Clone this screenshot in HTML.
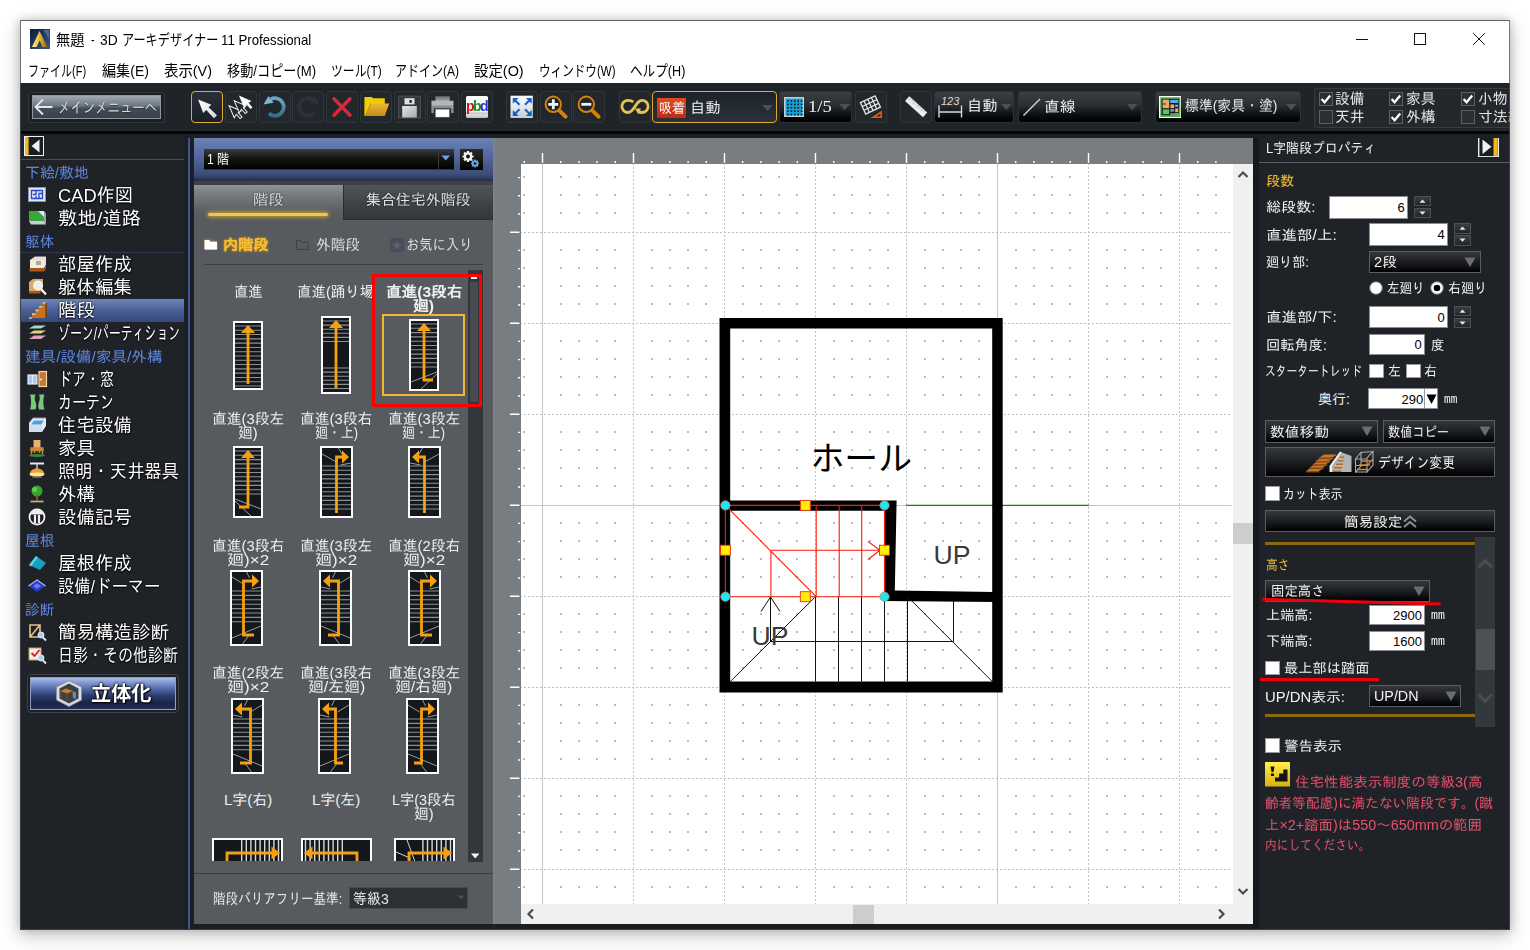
<!DOCTYPE html>
<html lang="ja"><head><meta charset="utf-8"><title>3D アーキデザイナー11 Professional</title>
<style>
html,body{margin:0;padding:0}
body{width:1530px;height:950px;overflow:hidden;background:#fff;position:relative;font-family:"Liberation Sans","IPAGothic",sans-serif}
div,span.t,svg{position:absolute;box-sizing:border-box}
span.t{white-space:nowrap;line-height:1;transform-origin:0 50%;display:block}
.sys{font-family:"Liberation Sans","Noto Sans CJK JP",sans-serif}
.tb{border:1px solid #30353b;border-radius:3px;background:#22272c}
.cb{border:1px solid #2c3035;border-radius:3px;background:linear-gradient(#3b3e43,#2a2d31 45%,#0a0b0c 80%,#000)}
.dd{border:1px solid #5a5e63;background:linear-gradient(#34373b,#1c1e20 50%,#000)}
.inp{background:#fff;border:1px solid #8a8d90}
.sp{background:linear-gradient(#3a3d41,#222528);border:1px solid #4c5055}
.chk{background:#fff;border:1px solid #999}
.dchk{background:#2b2e33;border:1px solid #5b5f64}
.glow{text-shadow:0 0 2px #000,0 1px 2px #000}
</style></head>
<body>
<div style="left:20px;top:20px;width:1490px;height:910px;background:#1f2328;box-shadow:0 0 9px rgba(0,0,0,.2),0 6px 18px 1px rgba(0,0,0,.2);"></div>
<div style="left:20px;top:20px;width:1490px;height:63px;background:#fff;border-top:1px solid #6e6e6e;border-left:1px solid #8a8a8a;border-right:1px solid #8a8a8a"></div>
<svg style="left:30px;top:29px;" width="20" height="20" viewBox="0 0 20 20"><defs><linearGradient id="ai" x1="0" y1="0" x2="1" y2="1"><stop offset="0" stop-color="#0b1a3a"/><stop offset="1" stop-color="#3a5a8a"/></linearGradient>
<linearGradient id="ag" x1="0" y1="0" x2="1" y2="0"><stop offset="0" stop-color="#fff0a0"/><stop offset=".5" stop-color="#e8b830"/><stop offset="1" stop-color="#8a6010"/></linearGradient></defs>
<rect width="20" height="20" fill="url(#ai)"/><path d="M13.5 1 L19 1 L19 10 Z" fill="#4a6a9a"/><path d="M9.5 2 L17.5 18 L12.5 18 L9.8 11.5 L6.5 18 L2 18 Z" fill="url(#ag)"/></svg>
<div style="left:54px;top:28px;width:262px;height:24px;">
<span class="t sys" style="left:2px;top:4px;font-size:15px;color:#000;transform:scaleX(0.9500);">無題</span>
<span class="t sys" style="left:36.8px;top:4px;font-size:15px;color:#000;transform:scaleX(0.7200);">-</span>
<span class="t sys" style="left:45.5px;top:4px;font-size:15px;color:#000;transform:scaleX(0.9211);">3D</span>
<span class="t sys" style="left:68.4px;top:4px;font-size:15px;color:#000;transform:scaleX(0.8118);">アーキデザイナー</span>
<span class="t sys" style="left:166.5px;top:4px;font-size:15px;color:#000;transform:scaleX(0.8824);">11 Professional</span>
</div>
<svg style="left:1350px;top:28px;" width="140" height="24" viewBox="0 0 140 24"><g stroke="#111" stroke-width="1" fill="none"><path d="M6 11.5h12"/><rect x="64.5" y="5.5" width="11" height="11"/><path d="M123.2 5.2l11.6 11.6M134.8 5.2l-11.6 11.6"/></g></svg>
<span class="t sys" style="left:28px;top:63px;font-size:15px;color:#000;transform:scaleX(0.7342);">ファイル(F)</span>
<span class="t sys" style="left:101.5px;top:63px;font-size:15px;color:#000;transform:scaleX(0.9400);">編集(E)</span>
<span class="t sys" style="left:164px;top:63px;font-size:15px;color:#000;transform:scaleX(0.9600);">表示(V)</span>
<span class="t sys" style="left:226.5px;top:63px;font-size:15px;color:#000;transform:scaleX(0.8775);">移動/コピー(M)</span>
<span class="t sys" style="left:330.5px;top:63px;font-size:15px;color:#000;transform:scaleX(0.7891);">ツール(T)</span>
<span class="t sys" style="left:395px;top:63px;font-size:15px;color:#000;transform:scaleX(0.8000);">アドイン(A)</span>
<span class="t sys" style="left:474px;top:63px;font-size:15px;color:#000;transform:scaleX(0.9615);">設定(O)</span>
<span class="t sys" style="left:539px;top:63px;font-size:15px;color:#000;transform:scaleX(0.7727);">ウィンドウ(W)</span>
<span class="t sys" style="left:630px;top:63px;font-size:15px;color:#000;transform:scaleX(0.8409);">ヘルプ(H)</span>
<div style="left:21px;top:83px;width:1488px;height:48px;background:#1f2429"></div>
<div style="left:21px;top:131px;width:1488px;height:2.5px;background:#050607"></div>
<div style="left:21px;top:133.5px;width:1488px;height:4.5px;background:#1d2125"></div>
<div style="left:28px;top:91.5px;width:137px;height:31px;border:1px solid #33383d;border-radius:3px;background:#1c2024"></div>
<div style="left:31.5px;top:94.5px;width:129.5px;height:24.5px;background:linear-gradient(#a0aab5,#6c7682 45%,#444d58 55%,#39414b);border:1px solid #8d96a0"></div>
<svg style="left:33px;top:97px;" width="24" height="20" viewBox="0 0 24 20"><path d="M19.500 10H2.500M10 2.500L2.500 10l7.500 7.500" fill="none" stroke="#e4e8ec" stroke-width="1.800"/></svg>
<span class="t" style="left:58px;top:99.5px;font-size:15px;color:#d5dae0;transform:scaleX(0.8250);text-shadow:0 1px 1px #333">メインメニューへ</span>
<div style="left:191px;top:91px;width:32px;height:32px;border:1.5px solid #dcab2f;border-radius:4px;background:linear-gradient(#2a303a,#1b2028)"></div>
<svg style="left:191px;top:91px;" width="32" height="32" viewBox="0 0 32 32"><defs><linearGradient id="ar" x1="0" y1="0" x2="1" y2="1"><stop offset="0" stop-color="#ffffff"/><stop offset="1" stop-color="#d4d6d8"/></linearGradient></defs><path d="M7.100 8.400L20.400 13.800 17.600 16.300 26 24.300 23 27.300 15.200 19 12.200 22z" fill="url(#ar)"/></svg>
<div class="tb" style="left:224.75px;top:91px;width:32px;height:32px;"></div>
<svg style="left:224.75px;top:91px;" width="32" height="32" viewBox="0 0 32 32"><path transform="translate(4.100 14.800) scale(.95)" d="M0 0L12.600 5.400 9.600 7.200 13.600 11.800 11.600 13.500 7.600 9 5.400 12.600z" fill="#22272c" stroke="#e8e8e8" stroke-width="1.100"/><path transform="translate(9.200 9.700) scale(.95)" d="M0 0L12.600 5.400 9.600 7.200 13.600 11.800 11.600 13.500 7.600 9 5.400 12.600z" fill="#22272c" stroke="#e8e8e8" stroke-width="1.100"/>
<path transform="translate(13.900 4.600)" d="M0 0L12.600 5.400 9.600 7.200 13.600 11.800 11.600 13.500 7.600 9 5.400 12.600z" fill="#fafafa"/></svg>
<div class="tb" style="left:258.5px;top:91px;width:32px;height:32px;"></div>
<svg style="left:258.5px;top:91px;" width="32" height="32" viewBox="0 0 32 32"><defs><linearGradient id="un" x1="0" y1="0" x2="0" y2="1"><stop offset="0" stop-color="#6aaac0"/><stop offset="1" stop-color="#356d86"/></linearGradient></defs><path d="M11.900 8.200A8.800 8.800 0 1 1 9.900 22.400" fill="none" stroke="url(#un)" stroke-width="3.800"/><path d="M4.400 13.500L9.500 5 14.600 11.800z" fill="#78b6cc"/></svg>
<div class="tb" style="left:292.25px;top:91px;width:32px;height:32px;"></div>
<svg style="left:292.25px;top:91px;" width="32" height="32" viewBox="0 0 32 32"><path d="M20.100 8.200A8.800 8.800 0 1 0 22.100 22.400" fill="none" stroke="#2c3237" stroke-width="3.800"/><path d="M27.600 13.500L22.500 5 17.400 11.800z" fill="#2c3237"/></svg>
<div class="tb" style="left:326px;top:91px;width:32px;height:32px;"></div>
<svg style="left:326px;top:91px;" width="32" height="32" viewBox="0 0 32 32"><path d="M8 7.800l16 16.400M24 7.800l-16 16.400" stroke="#d42a3a" stroke-width="3.500" stroke-linecap="round"/></svg>
<div class="tb" style="left:359.75px;top:91px;width:32px;height:32px;"></div>
<svg style="left:359.75px;top:91px;" width="32" height="32" viewBox="0 0 32 32"><defs><linearGradient id="fo" x1="0" y1="0" x2="0" y2="1"><stop offset="0" stop-color="#ecb838"/><stop offset="1" stop-color="#c48a14"/></linearGradient></defs>
<path d="M4.400 6h7.500l1.200 1.300h11.700V25H4.400z" fill="#f2cc04"/><path d="M10.900 12.400h18.300L24.800 25H5.100z" fill="url(#fo)"/><path d="M10.900 12.400L5.100 25" stroke="#a87808" stroke-width=".6"/></svg>
<div class="tb" style="left:393.5px;top:91px;width:32px;height:32px;"></div>
<svg style="left:393.5px;top:91px;" width="32" height="32" viewBox="0 0 32 32"><defs><linearGradient id="fl" x1="0" y1="0" x2="1" y2="1"><stop offset="0" stop-color="#e6e8ea"/><stop offset="1" stop-color="#a4a8ac"/></linearGradient></defs>
<rect x="4.600" y="5.200" width="21.800" height="21.800" fill="#32373c" stroke="#4c5156"/><rect x="10.500" y="7.200" width="10" height="6.200" fill="#dcdee0"/><rect x="15.500" y="9" width="2.200" height="2.800" fill="#111"/><rect x="8.200" y="15" width="14.600" height="11.500" fill="url(#fl)"/></svg>
<div class="tb" style="left:427.25px;top:91px;width:32px;height:32px;"></div>
<svg style="left:427.25px;top:91px;" width="32" height="32" viewBox="0 0 32 32"><defs><linearGradient id="pr" x1="0" y1="0" x2="0" y2="1"><stop offset="0" stop-color="#666b70"/><stop offset="1" stop-color="#a0a4a8"/></linearGradient></defs>
<rect x="8.500" y="5.200" width="14.300" height="4.800" fill="url(#pr)"/><rect x="4.400" y="9.700" width="22.100" height="5.200" fill="#b2b6ba"/><rect x="4.400" y="14.900" width="22.100" height="2.500" fill="#888c90"/><rect x="4.400" y="17" width="2.400" height="5" fill="#90949a"/><rect x="24.100" y="17" width="2.400" height="5" fill="#90949a"/><rect x="8.800" y="18.600" width="13.300" height="7.400" fill="#fff" stroke="#c8ccd0" stroke-width=".6"/><rect x="24" y="16" width="1.800" height="1.400" fill="#8ee04a"/><rect x="24.200" y="17.600" width="1.400" height="1.200" fill="#c83a5a"/></svg>
<div class="tb" style="left:461px;top:91px;width:32px;height:32px;"></div>
<div style="left:466px;top:96.2px;width:22px;height:21.8px;background:linear-gradient(#fff,#f4f4f4 70%,#c4c4c4 78%,#e0e0e0 86%,#bdbdbd);border-radius:1.500px"></div>
<span class="t" style="left:465.7px;top:97.75px;font-size:15.5px;color:#d8121c;transform:scaleX(0.9111);font-weight:bold">p</span>
<span class="t" style="left:472.9px;top:97.75px;font-size:15.5px;color:#14922a;transform:scaleX(0.9111);font-weight:bold">b</span>
<span class="t" style="left:480.1px;top:97.75px;font-size:15.5px;color:#2a32d8;transform:scaleX(0.9111);font-weight:bold">d</span>
<div class="tb" style="left:506.3px;top:91px;width:32px;height:32px;"></div>
<svg style="left:506.3px;top:91px;" width="32" height="32" viewBox="0 0 32 32"><defs><linearGradient id="ft" x1="0" y1="0" x2="0" y2="1"><stop offset="0" stop-color="#f8fafc"/><stop offset=".5" stop-color="#e4e8ee"/><stop offset="1" stop-color="#c4ccd4"/></linearGradient></defs><rect x="4.500" y="4.700" width="22.300" height="22.300" fill="url(#ft)"/>
<g stroke="#165fc4" stroke-width="2" fill="none"><path d="M13.500 13.700L8 8.200M19 13.700l5.500-5.500M13.500 18.200L8 23.700M19 18.200l5.500 5.500"/></g><g fill="#165fc4"><path d="M6.800 7h5.800L6.800 12.800zM25.700 7h-5.800l5.800 5.800zM6.800 24.900h5.800L6.800 19.100zM25.700 24.900h-5.800l5.800-5.800z"/></g></svg>
<div class="tb" style="left:539.6px;top:91px;width:32px;height:32px;"></div>
<svg style="left:539.6px;top:91px;" width="32" height="32" viewBox="0 0 32 32"><circle cx="13.300" cy="13.300" r="7.700" fill="#1f2429" stroke="#d4820a" stroke-width="2"/><path d="M19.400 19.600l6.200 6" stroke="#d4820a" stroke-width="4" stroke-linecap="round"/><path d="M13.300 8.300v10M8.300 13.300h10" stroke="#f4f4f4" stroke-width="2.800"/></svg>
<div class="tb" style="left:573px;top:91px;width:32px;height:32px;"></div>
<svg style="left:573px;top:91px;" width="32" height="32" viewBox="0 0 32 32"><circle cx="13.300" cy="13.300" r="7.700" fill="#1f2429" stroke="#d4820a" stroke-width="2"/><path d="M19.400 19.600l6.200 6" stroke="#d4820a" stroke-width="4" stroke-linecap="round"/><path d="M8.300 13.300h10" stroke="#f4f4f4" stroke-width="2.800"/></svg>
<div class="tb" style="left:618.5px;top:91px;width:32px;height:32px;"></div>
<svg style="left:618.5px;top:91px;" width="32" height="32" viewBox="0 0 32 32"><path d="M14.300 10.800C12.500 9.600 11 9.300 9 9.300a6.100 6.100 0 0 0 0 12.200c3 0 4.500-2 7-6 2.500-4 4-6.200 7-6.200a6.100 6.100 0 0 1 0 12.200c-1.500 0-2.600-.3-3.600-1" fill="none" stroke="#e6c450" stroke-width="2.800"/><path d="M15.800 17.600l6.200-.2-2.600 5.800z" fill="#e6c450"/></svg>
<div style="left:652px;top:91px;width:125px;height:32px;border:1.5px solid #dcab2f;border-radius:4px;background:linear-gradient(#1d2229,#2a313b)"></div>
<div style="left:657px;top:98px;width:29px;height:20px;background:linear-gradient(#e04a22,#c02a10)"></div>
<span class="t" style="left:658.5px;top:101px;font-size:14px;color:#fff;transform:scaleX(0.9286);">吸着</span>
<span class="t" style="left:690px;top:99.7px;font-size:15px;color:#f0f0f0;transform:scaleX(1.0167);">自動</span>
<svg style="left:762px;top:105px;" width="12" height="7" viewBox="0 0 12 7"><path d="M0 0h11L5.5 6z" fill="#4b5058"/></svg>
<div class="cb" style="left:779px;top:91px;width:73px;height:31.5px;"></div>
<svg style="left:784px;top:97px;" width="20" height="20" viewBox="0 0 20 20"><rect width="20" height="20" fill="#c8ccd0"/><rect x="1.5" y="1.5" width="17" height="17" fill="#12a3d6"/>
<g fill="#101418"><rect x="3.2" y="3.2" width="1.6" height="1.6"/><rect x="3.2" y="6.6" width="1.6" height="1.6"/><rect x="3.2" y="10.0" width="1.6" height="1.6"/><rect x="3.2" y="13.399999999999999" width="1.6" height="1.6"/><rect x="3.2" y="16.8" width="1.6" height="1.6"/><rect x="6.6" y="3.2" width="1.6" height="1.6"/><rect x="6.6" y="6.6" width="1.6" height="1.6"/><rect x="6.6" y="10.0" width="1.6" height="1.6"/><rect x="6.6" y="13.399999999999999" width="1.6" height="1.6"/><rect x="6.6" y="16.8" width="1.6" height="1.6"/><rect x="10.0" y="3.2" width="1.6" height="1.6"/><rect x="10.0" y="6.6" width="1.6" height="1.6"/><rect x="10.0" y="10.0" width="1.6" height="1.6"/><rect x="10.0" y="13.399999999999999" width="1.6" height="1.6"/><rect x="10.0" y="16.8" width="1.6" height="1.6"/><rect x="13.399999999999999" y="3.2" width="1.6" height="1.6"/><rect x="13.399999999999999" y="6.6" width="1.6" height="1.6"/><rect x="13.399999999999999" y="10.0" width="1.6" height="1.6"/><rect x="13.399999999999999" y="13.399999999999999" width="1.6" height="1.6"/><rect x="13.399999999999999" y="16.8" width="1.6" height="1.6"/><rect x="16.8" y="3.2" width="1.6" height="1.6"/><rect x="16.8" y="6.6" width="1.6" height="1.6"/><rect x="16.8" y="10.0" width="1.6" height="1.6"/><rect x="16.8" y="13.399999999999999" width="1.6" height="1.6"/><rect x="16.8" y="16.8" width="1.6" height="1.6"/></g></svg>
<span class="t" style="left:807.5px;top:97.5px;font-size:17px;color:#f0f0f0;font-family:'Liberation Serif',serif;transform:scaleX(1.0909);">1/5</span>
<svg style="left:838.5px;top:104px;" width="12" height="7" viewBox="0 0 12 7"><path d="M0 0h11L5.5 6z" fill="#4b5058"/></svg>
<div class="tb" style="left:855px;top:91px;width:32px;height:32px;"></div>
<svg style="left:855px;top:91px;" width="32" height="32" viewBox="0 0 32 32"><g transform="translate(1.500 1.500) scale(.9) rotate(-25 15 14)"><rect x="6.500" y="7" width="18" height="14" fill="none" stroke="#e4e4e4" stroke-width="1.500"/><path d="M11 7v14M15.500 7v14M20 7v14M6.500 11.700h18M6.500 16.400h18" stroke="#e4e4e4" stroke-width="1.400"/></g><path d="M15.500 27h11.500v-7.500z" fill="#e05a10"/><path d="M21 25.600h4.300v-2.800z" fill="#22272c"/></svg>
<div class="tb" style="left:899.5px;top:91px;width:32px;height:32px;"></div>
<svg style="left:899.5px;top:91px;" width="32" height="32" viewBox="0 0 32 32"><g transform="rotate(42 16 16) translate(2.200 2) scale(.86)"><rect x="2" y="12.300" width="28" height="7.400" fill="#ececec"/><path d="M5 12.300v3.500M8 12.300v2.200M11 12.300v3.500M14 12.300v2.200M17 12.300v3.500M20 12.300v2.200M23 12.300v3.500M26 12.300v2.200" stroke="#a4a4a4" stroke-width="1"/></g></svg>
<div class="cb" style="left:934px;top:91px;width:80px;height:31.5px;"></div>
<svg style="left:937px;top:94px;" width="27" height="26" viewBox="0 0 27 26"><g stroke="#d8d8d8" stroke-width="1.4" fill="none"><path d="M2 11.5v12M24.5 11.5v12M2 18h22.5"/></g></svg>
<span class="t" style="left:941px;top:95.5px;font-size:11px;color:#d8d8d8;font-style:italic">123</span>
<span class="t" style="left:967px;top:98.2px;font-size:15px;color:#f0f0f0;transform:scaleX(1.0167);">自動</span>
<svg style="left:1001px;top:104px;" width="12" height="7" viewBox="0 0 12 7"><path d="M0 0h10.5L5.2 6z" fill="#4b5058"/></svg>
<div class="cb" style="left:1018px;top:91px;width:124px;height:31.5px;"></div>
<svg style="left:1021px;top:96px;" width="22" height="22" viewBox="0 0 22 22"><path d="M2.5 19.5L19 3" stroke="#c8c8c8" stroke-width="1.6"/></svg>
<span class="t" style="left:1044px;top:98.5px;font-size:15px;color:#f0f0f0;transform:scaleX(1.0500);">直線</span>
<svg style="left:1127px;top:104px;" width="12" height="7" viewBox="0 0 12 7"><path d="M0 0h10.5L5.2 6z" fill="#4b5058"/></svg>
<div class="cb" style="left:1154.5px;top:91px;width:146.5px;height:31.5px;"></div>
<svg style="left:1158.8px;top:95.8px;" width="22.6" height="22.2" viewBox="0 0 22.6 22.2"><rect width="22.600" height="22.200" fill="#fff"/><rect x="1.200" y="1.200" width="20.200" height="19.800" fill="#4ab850"/><rect x="2.600" y="2.800" width="17.200" height="16.400" fill="#15181a"/>
<rect x="3.600" y="3.600" width="6.600" height="8.600" fill="#eda864"/><rect x="3.600" y="7.600" width="3.600" height=".8" fill="#15181a"/><rect x="11.200" y="3.800" width="8" height="3.200" fill="#56acf4"/><rect x="11.400" y="8.400" width="3.800" height="3.600" fill="#eda864"/><rect x="16.200" y="8.600" width="2.800" height="2.400" fill="#56acf4"/>
<rect x="16.200" y="12.400" width="3" height="3.800" fill="#eda864"/><rect x="11.200" y="12.800" width="4" height="3" fill="#808890"/><rect x="3.800" y="13.400" width="6.400" height="4.800" fill="#5cc862"/><rect x="11.200" y="17.200" width="4.800" height="2.200" fill="#8688a0"/><path d="M16 17h5v3.500h-5z" fill="#4ab850"/></svg>
<span class="t" style="left:1184.5px;top:98.2px;font-size:15px;color:#e8e8e8;transform:scaleX(0.9250);">標準(家具・塗)</span>
<svg style="left:1286px;top:104px;" width="12" height="7" viewBox="0 0 12 7"><path d="M0 0h10.5L5.2 6z" fill="#4b5058"/></svg>
<div style="left:1314px;top:88px;width:196px;height:40px;overflow:hidden;box-shadow:inset 1px 0 0 #363b40,inset 0 1px 0 #363b40,inset 0 -1px 0 #363b40;border-radius:3px 0 0 3px;background:#23282d">
<div class="dchk" style="left:4.5px;top:3.6px;width:14px;height:14px;"></div>
<svg style="left:4.5px;top:3.6px;" width="14" height="14" viewBox="0 0 14 14"><path d="M2.6 7l3 3.2 5.6-6.6" fill="none" stroke="#fff" stroke-width="2.3"/></svg>
<span class="t" style="left:20.7px;top:3.1px;font-size:15px;color:#e6e6e6;transform:scaleX(0.9833);">設備</span>
<div class="dchk" style="left:4.5px;top:21.6px;width:14px;height:14px;"></div>
<span class="t" style="left:20.7px;top:21.1px;font-size:15px;color:#e6e6e6;transform:scaleX(0.9833);">天井</span>
<div class="dchk" style="left:75px;top:3.6px;width:14px;height:14px;"></div>
<svg style="left:75px;top:3.6px;" width="14" height="14" viewBox="0 0 14 14"><path d="M2.6 7l3 3.2 5.6-6.6" fill="none" stroke="#fff" stroke-width="2.3"/></svg>
<span class="t" style="left:91.8px;top:3.1px;font-size:15px;color:#e6e6e6;transform:scaleX(0.9833);">家具</span>
<div class="dchk" style="left:75px;top:21.6px;width:14px;height:14px;"></div>
<svg style="left:75px;top:21.6px;" width="14" height="14" viewBox="0 0 14 14"><path d="M2.6 7l3 3.2 5.6-6.6" fill="none" stroke="#fff" stroke-width="2.3"/></svg>
<span class="t" style="left:91.8px;top:21.1px;font-size:15px;color:#e6e6e6;transform:scaleX(0.9833);">外構</span>
<div class="dchk" style="left:147px;top:3.6px;width:14px;height:14px;"></div>
<svg style="left:147px;top:3.6px;" width="14" height="14" viewBox="0 0 14 14"><path d="M2.6 7l3 3.2 5.6-6.6" fill="none" stroke="#fff" stroke-width="2.3"/></svg>
<span class="t" style="left:164px;top:3.1px;font-size:15px;color:#e6e6e6;transform:scaleX(0.9833);">小物</span>
<div class="dchk" style="left:147px;top:21.6px;width:14px;height:14px;"></div>
<span class="t" style="left:164px;top:21.1px;font-size:15px;color:#e6e6e6;transform:scaleX(0.9889);">寸法線</span>
</div>
<div style="left:21px;top:138px;width:164px;height:791px;background:#1f2328">
<svg style="left:3px;top:-2px;" width="20" height="20" viewBox="0 0 20 20"><rect x=".5" y=".5" width="19" height="19" fill="#1a1d20" stroke="#f0f0f0"/><rect x="1" y="1" width="3.600" height="18" fill="#f2b824"/><path d="M15.500 3.500v13L7.500 10z" fill="#f0f0f0"/></svg>
<div style="left:0px;top:21px;width:163px;height:1px;background:#4a4f55"></div>
<span class="t" style="left:4px;top:26.5px;font-size:15px;color:#5f86e0;transform:scaleX(0.9922);">下絵/敷地</span>
<span class="t" style="left:4px;top:95.5px;font-size:15px;color:#5f86e0;transform:scaleX(0.9833);">躯体</span>
<span class="t" style="left:4px;top:210.5px;font-size:15px;color:#5f86e0;transform:scaleX(1.0376);">建具/設備/家具/外構</span>
<span class="t" style="left:4px;top:394.5px;font-size:15px;color:#5f86e0;transform:scaleX(0.9833);">屋根</span>
<span class="t" style="left:4px;top:463.5px;font-size:15px;color:#5f86e0;transform:scaleX(0.9833);">診断</span>
<div style="left:0px;top:114px;width:163px;height:1px;background:#2f3a55"></div>
<svg style="left:6px;top:47px;" width="22" height="20" viewBox="0 0 22 20"><rect x="1.500" y="2.500" width="17" height="14" fill="#dfe6f4" stroke="#8a94b0"/><path d="M4.500 5.500h11v8h-11zM9 5.500v4h-3M12 13.500v-5h3.500M9 11v2.500" fill="none" stroke="#2a48c8" stroke-width="1.300"/></svg>
<span class="t glow" style="left:37px;top:47.5px;font-size:19px;color:#fff;transform:scaleX(0.9615);">CAD作図</span>
<svg style="left:6px;top:70px;" width="22" height="20" viewBox="0 0 22 20"><path d="M2 3h15v10H2z" fill="#3aa838"/><path d="M2 13h15l2 3.500H4z" fill="#c8ccd0"/><path d="M17 3l2 2.500v11l-2-3.500z" fill="#a0a6ac"/><path d="M11 3h6v6z" fill="#e4e8ec"/></svg>
<span class="t glow" style="left:37px;top:70.5px;font-size:19px;color:#fff;transform:scaleX(1.0247);">敷地/道路</span>
<svg style="left:6px;top:116px;" width="22" height="20" viewBox="0 0 22 20"><path d="M3 6L8 2.500h11V11L17 14H3z" fill="#e8e0d0"/><path d="M3 6v8h14V6z" fill="#f4ecd8"/><path d="M2.500 14h14.500l2-3v3.500l-2 3H2.500z" fill="#a85818"/><rect x="9" y="7" width="5" height="4" fill="#a8a8b0"/></svg>
<span class="t glow" style="left:37px;top:116.5px;font-size:19px;color:#fff;transform:scaleX(0.9737);">部屋作成</span>
<svg style="left:6px;top:139px;" width="22" height="20" viewBox="0 0 22 20"><path d="M2 5l4-3h10v8l-3 4H2z" fill="#d8a868"/><path d="M2 14h11l3-4v2.500l-3 4H2z" fill="#a85818"/><circle cx="11" cy="8.500" r="4.300" fill="#e8eef4" stroke="#f4f4f4" stroke-width="1.500"/><path d="M14 12l5 5.500" stroke="#f4f4f4" stroke-width="2.400"/></svg>
<span class="t glow" style="left:37px;top:139.5px;font-size:19px;color:#fff;transform:scaleX(0.9737);">躯体編集</span>
<div style="left:0px;top:161px;width:163px;height:23px;background:linear-gradient(#6e86bc,#4a5f93 50%,#37487a)"></div>
<svg style="left:6px;top:162px;" width="22" height="20" viewBox="0 0 22 20"><path d="M3 18h16V3h-3.500v3.700H12v3.700H8.500v3.700H5V18z" fill="#c87020"/><path d="M15.500 3H19M12 6.700h3.500M8.500 10.400H12M5 14.100h3.500M2 18h3" stroke="#f0c078" stroke-width="1.600"/><path d="M19 3v15" stroke="#7a3c0c" stroke-width="1.500"/></svg>
<span class="t glow" style="left:37px;top:162.5px;font-size:19px;color:#fff;transform:scaleX(0.9737);">階段</span>
<svg style="left:6px;top:185px;" width="22" height="20" viewBox="0 0 22 20"><path d="M2 5.500l5-3h12l-5 3z" fill="#a8d8c8"/><path d="M2 10.500l5-3h12l-5 3z" fill="#e8d080"/><path d="M2 16l5-3.500h12l-5 3.500z" fill="#e0a0b8"/></svg>
<span class="t glow" style="left:37px;top:185.5px;font-size:19px;color:#fff;transform:scaleX(0.6256);">ゾーン/パーティション</span>
<svg style="left:6px;top:231px;" width="22" height="20" viewBox="0 0 22 20"><rect x="1" y="6" width="9" height="9" fill="#a8c8f0" stroke="#e8ecf0" stroke-width="1.200"/><path d="M5.500 6v9" stroke="#e8ecf0"/><rect x="12" y="2.500" width="7.500" height="15" fill="#c87830" stroke="#f0d8b0" stroke-width="1.200"/><circle cx="14" cy="10.500" r=".9" fill="#fff"/></svg>
<span class="t glow" style="left:37px;top:231.5px;font-size:19px;color:#fff;transform:scaleX(0.7368);">ドア・窓</span>
<svg style="left:6px;top:254px;" width="22" height="20" viewBox="0 0 22 20"><path d="M3 2.500h5.500c-1 4-1 4 0 7.500s1 4 0 7.500H3c1.500-4 1.500-11 0-15z" fill="#78c878"/><path d="M17.500 2.500H12c1 4 1 4 0 7.500s-1 4 0 7.500h5.500c-1.500-4-1.500-11 0-15z" fill="#78c878"/></svg>
<span class="t glow" style="left:37px;top:254.5px;font-size:19px;color:#fff;transform:scaleX(0.7368);">カーテン</span>
<svg style="left:6px;top:277px;" width="22" height="20" viewBox="0 0 22 20"><path d="M2 8l4-5h13v8l-4 6H2z" fill="#e8ecf0"/><path d="M4 9.500l3-4h10l-3 4z" fill="#48a0e8"/><path d="M2 10h13v7H2z" fill="#d0dcf0"/><path d="M2 8l4-5h13" fill="none" stroke="#8a94a0"/></svg>
<span class="t glow" style="left:37px;top:277.5px;font-size:19px;color:#fff;transform:scaleX(0.9737);">住宅設備</span>
<svg style="left:6px;top:300px;" width="22" height="20" viewBox="0 0 22 20"><path d="M6.500 2h7v8h-7z" fill="#e8b070"/><path d="M4 10h12v2.500H4zM4.500 12.500v4M15.500 12.500v4M7.500 12.500v2.500M12.500 12.500v2.500" fill="#c88838" stroke="#c88838" stroke-width="1.400"/><ellipse cx="10" cy="17.500" rx="8" ry="1.500" fill="#3a8a3a"/></svg>
<span class="t glow" style="left:37px;top:300.5px;font-size:19px;color:#fff;transform:scaleX(0.9737);">家具</span>
<svg style="left:6px;top:323px;" width="22" height="20" viewBox="0 0 22 20"><path d="M3 2.500h14" stroke="#e8e8e8" stroke-width="2"/><path d="M10 3v5" stroke="#c8c8c8" stroke-width="1.500"/><path d="M2.500 13c1-4 4-5.500 7.500-5.500s6.500 1.500 7.500 5.500z" fill="#f0a030"/><ellipse cx="10" cy="13.500" rx="7.500" ry="2" fill="#ffe890"/><path d="M5 16.500h10" stroke="#806020" stroke-width="1"/></svg>
<span class="t glow" style="left:37px;top:323.5px;font-size:19px;color:#fff;transform:scaleX(0.9098);">照明・天井器具</span>
<svg style="left:6px;top:346px;" width="22" height="20" viewBox="0 0 22 20"><circle cx="10" cy="7" r="5.500" fill="#3aa030"/><circle cx="7.500" cy="5.500" r="2.500" fill="#68c850"/><path d="M10 11v6" stroke="#8a5a20" stroke-width="1.800"/><path d="M3.500 17.500h13" stroke="#c8a878" stroke-width="1.800"/></svg>
<span class="t glow" style="left:37px;top:346.5px;font-size:19px;color:#fff;transform:scaleX(0.9737);">外構</span>
<svg style="left:6px;top:369px;" width="22" height="20" viewBox="0 0 22 20"><circle cx="10" cy="10" r="7.500" fill="#1a1c1e" stroke="#f0f0f0" stroke-width="1.800"/><path d="M3.500 7.500h13a7 7 0 0 0-13 0z" fill="#f0f0f0"/><path d="M8 8v8M12 8v8" stroke="#f0f0f0" stroke-width="2.200"/></svg>
<span class="t glow" style="left:37px;top:369.5px;font-size:19px;color:#fff;transform:scaleX(0.9737);">設備記号</span>
<svg style="left:6px;top:415px;" width="22" height="20" viewBox="0 0 22 20"><path d="M2 12L9 3l10 7-6 7z" fill="#18a0c0"/><path d="M2 12L9 3l2 1.500-7 9z" fill="#58d0e8"/></svg>
<span class="t glow" style="left:37px;top:415.5px;font-size:19px;color:#fff;transform:scaleX(0.9737);">屋根作成</span>
<svg style="left:6px;top:438px;" width="22" height="20" viewBox="0 0 22 20"><path d="M1.500 10L10 4l8.500 6-8.500 6z" fill="#2838c8"/><path d="M1.500 10L10 4l8.500 6" fill="none" stroke="#a8b8f8" stroke-width="1.200"/><path d="M6 10l4-3 4 3-4 3z" fill="#6878f0"/></svg>
<span class="t glow" style="left:37px;top:438.5px;font-size:19px;color:#fff;transform:scaleX(0.8571);">設備/ドーマー</span>
<svg style="left:6px;top:484px;" width="22" height="20" viewBox="0 0 22 20"><path d="M3 3h10v12H3zM3 15L13 3" fill="none" stroke="#e8c088" stroke-width="1.600"/><circle cx="14" cy="13" r="3" fill="#a8d0f8" stroke="#e8ecf0"/><path d="M16 15.500l3 3" stroke="#e8ecf0" stroke-width="1.800"/></svg>
<span class="t glow" style="left:37px;top:484.5px;font-size:19px;color:#fff;transform:scaleX(0.9737);">簡易構造診断</span>
<svg style="left:6px;top:507px;" width="22" height="20" viewBox="0 0 22 20"><rect x="2" y="3" width="12" height="12" fill="#f0f0f0" stroke="#c89858"/><path d="M4.500 8l3 3 5-6" fill="none" stroke="#d82020" stroke-width="1.800"/><circle cx="14" cy="13" r="3" fill="#a8d0f8" stroke="#e8ecf0"/><path d="M16 15.500l3 3" stroke="#e8ecf0" stroke-width="1.800"/></svg>
<span class="t glow" style="left:37px;top:507.5px;font-size:19px;color:#fff;transform:scaleX(0.7895);">日影・その他診断</span>
<div style="left:6px;top:536px;width:152px;height:39px;border:1px solid #3d4248;border-radius:4px;background:#1c1f23"></div>
<div style="left:9px;top:539px;width:146px;height:33px;border:1px solid #8ea0c8;background:linear-gradient(#a8bcec,#5f76b4 30%,#2e3f74 55%,#1a2448 80%,#222e58)"></div>
<svg style="left:33px;top:541px;" width="30" height="29" viewBox="0 0 30 29"><path d="M15 1.500L27.500 8v13L15 27.500 2.500 21V8z" fill="#d8dce0" stroke="#8a9098" stroke-width="1"/><path d="M15 4.500L24.500 9.500v10L15 24.500 5.500 19.500v-10z" fill="#3a4048"/>
<path d="M6 12l6-2.500 7 2.500-6 2.500z" fill="#c87830"/><path d="M7 13v6M13 14.500v7M18.500 12.500v5" stroke="#804818" stroke-width="1.200"/><path d="M19 12l3 1.500v6.500l-3-1z" fill="#4a90d8"/></svg>
<span class="t" style="left:69.8px;top:545.5px;font-size:20px;color:#fff;font-family:'Liberation Sans','Noto Sans CJK JP',sans-serif;transform:scaleX(1.0083);font-weight:bold;text-shadow:0 0 3px #000,0 0 2px #000,1px 1px 1px #000">立体化</span>
</div>
<div style="left:185px;top:138px;width:8px;height:791px;background:#1a1d21"></div>
<div style="left:187.5px;top:138px;width:2px;height:791px;background:#3f5594"></div>
<div style="left:193.5px;top:138px;width:299.5px;height:786px;background:#575b5f">
<div style="left:0px;top:0px;width:299.5px;height:42.5px;background:linear-gradient(#6c82b4,#5469a0 40%,#3c4d78 85%,#222c48)"></div>
<div style="left:10.5px;top:10.5px;width:250px;height:21px;background:linear-gradient(#3c3c3e,#161616 45%,#000);border-bottom:1px solid #3a3030"></div>
<div style="left:244.5px;top:10.5px;width:1px;height:21px;background:#3a3a3c"></div>
<span class="t" style="left:13px;top:14px;font-size:14px;color:#fff;transform:scaleX(0.8654);">1 階</span>
<svg style="left:247.5px;top:17px;" width="10" height="7" viewBox="0 0 10 7"><path d="M.5 .5h8.500L4.800 5.500z" fill="#6fa4ea"/></svg>
<div style="left:266.5px;top:10.5px;width:22.5px;height:21.5px;background:linear-gradient(#2a2a2c,#000)"></div>
<svg style="left:266.5px;top:10.5px;" width="22.5" height="21.5" viewBox="0 0 22.5 21.5"><g fill="#f4f4f4"><circle cx="8" cy="7.500" r="4.200"/><g stroke="#f4f4f4" stroke-width="2.200"><path d="M8 2v11M2.500 7.500h11M4.100 3.600l7.800 7.800M11.900 3.600l-7.800 7.800"/></g></g><circle cx="8" cy="7.500" r="1.900" fill="#111"/>
<g fill="#6aa8ee"><circle cx="15" cy="14.500" r="3"/><g stroke="#6aa8ee" stroke-width="1.700"><path d="M15 10.500v8M11 14.500h8M12.200 11.700l5.600 5.600M17.800 11.700l-5.600 5.600"/></g></g><circle cx="15" cy="14.500" r="1.300" fill="#111"/></svg>
<div style="left:0px;top:42.5px;width:299.5px;height:4.5px;background:#3e4246"></div>
<div style="left:0px;top:47px;width:149px;height:35px;background:linear-gradient(#8d9295,#74797c 30%,#5b5f63 75%,#575b5f)"></div>
<span class="t" style="left:59.25px;top:54px;font-size:15px;color:#dcdcdc;transform:scaleX(1.0167);text-shadow:0 0 2px #222">階段</span>
<div style="left:14.5px;top:74.5px;width:120px;height:3.5px;background:#f0c848;border-radius:2px;box-shadow:0 0 4px 1px rgba(240,180,40,.75)"></div>
<div style="left:149px;top:47px;width:150.5px;height:34.5px;background:linear-gradient(#50555a,#3c4145 60%,#33373b);border-left:1px solid #2a2d30;border-bottom:1px solid #2c2f32"></div>
<span class="t" style="left:172.25px;top:54px;font-size:15px;color:#e2e2e2;transform:scaleX(0.9952);text-shadow:0 0 2px #111">集合住宅外階段</span>
<svg style="left:10.5px;top:100px;" width="14" height="12" viewBox="0 0 14 12"><path d="M.5 2h4.500l1.500 1.800h6.500v7.700H.5z" fill="#fff" style="filter:drop-shadow(0 0 1.500px #f0a820)"/></svg>
<span class="t" style="left:29px;top:98.5px;font-size:15px;color:#f4c038;transform:scaleX(1.0111);text-shadow:0 0 3px #e89a10,0 0 1px #e89a10;font-weight:bold">内階段</span>
<svg style="left:102.5px;top:100.5px;" width="13" height="11" viewBox="0 0 13 11"><path d="M.5 1.500h4l1.300 1.600h6.200v7.400H.5z" fill="none" stroke="#3f4347" stroke-width="1"/></svg>
<span class="t" style="left:122px;top:98.5px;font-size:15px;color:#dedede;transform:scaleX(0.9778);">外階段</span>
<svg style="left:196px;top:99.5px;" width="14" height="14" viewBox="0 0 14 14"><rect width="14" height="14" rx="2" fill="#4a4e5a"/><path d="M7 2.500l1.400 3 3.200.4-2.400 2.200.7 3.200L7 9.700l-2.900 1.600.7-3.200L2.400 5.900l3.200-.4z" fill="#5c6070"/></svg>
<span class="t" style="left:212.5px;top:98.5px;font-size:15px;color:#dedede;transform:scaleX(0.8867);">お気に入り</span>
<div style="left:10.5px;top:126px;width:278.5px;height:1px;background:#3b3f43"></div>
<div style="left:274.5px;top:132px;width:14.5px;height:592px;background:#33373b"></div>
<div style="left:276px;top:143.5px;width:8px;height:120px;background:#474b50"></div>
<div style="left:277px;top:139px;width:6px;height:1.5px;background:#eee"></div>
<svg style="left:274.5px;top:713px;" width="14.5" height="10" viewBox="0 0 14.5 10"><path d="M3 2.500h8.500L7.250 7.500z" fill="#f4f4f4"/></svg>
<div style="left:6.5px;top:132px;width:268px;height:591px;overflow:hidden">
<span class="t" style="left:33.75px;top:13.5px;font-size:15px;color:#f0f0f0;transform:scaleX(0.9500);">直進</span>
<div style="left:92px;top:10px;width:80px;height:30px;overflow:hidden">
<span class="t" style="left:5px;top:3.5px;font-size:15px;color:#f0f0f0;transform:scaleX(0.9647);">直進(踊り場)</span>
</div>
<span class="t" style="left:185.5px;top:13.5px;font-size:15px;color:#f0f0f0;transform:scaleX(1.0411);font-weight:bold;">直進(3段右</span>
<span class="t" style="left:213px;top:27.8px;font-size:15px;color:#f0f0f0;transform:scaleX(1.0500);font-weight:bold;">廻)</span>
<svg style="left:33px;top:51px;" width="30" height="69" viewBox="0 0 30 69"><rect x="1" y="1" width="28" height="67" fill="#14181c" stroke="#fbfbfb" stroke-width="2"/><path d="M2 5H28M2 9.29H28M2 13.57H28M2 17.86H28M2 22.14H28M2 26.43H28M2 30.71H28M2 35H28M2 39.29H28M2 43.57H28M2 47.86H28M2 52.14H28M2 56.43H28M2 60.71H28M2 65H28" stroke="#8d9092" stroke-width="1.1" fill="none"/><path d="M15.0 63V9" stroke="#f5a010" stroke-width="2.800" fill="none"/><path d="M8 12L15 4L22 12z" fill="#f5a010"/></svg>
<svg style="left:121px;top:46px;" width="30" height="78" viewBox="0 0 30 78"><rect x="1" y="1" width="28" height="76" fill="#14181c" stroke="#fbfbfb" stroke-width="2"/><path d="M2 5H28M2 9.1H28M2 13.2H28M2 17.3H28M2 21.4H28M2 25.5H28M2 52H28M2 56.1H28M2 60.2H28M2 64.3H28M2 68.4H28M2 72.5H28" stroke="#8d9092" stroke-width="1.1" fill="none"/><path d="M15.0 72V9" stroke="#f5a010" stroke-width="2.800" fill="none"/><path d="M8 12L15 4L22 12z" fill="#f5a010"/></svg>
<svg style="left:209px;top:49px;" width="30" height="72" viewBox="0 0 30 72"><rect x="1" y="1" width="28" height="70" fill="#14181c" stroke="#fbfbfb" stroke-width="2"/><path d="M2 5H28M2 9.3H28M2 13.6H28M2 17.9H28M2 22.2H28M2 26.5H28M2 30.8H28M2 35.1H28M2 39.4H28M2 43.7H28M2 48H28" stroke="#8d9092" stroke-width="1.1" fill="none"/><path d="M2 63L28 53M12 70L28 55" stroke="#a8abad" stroke-width=".9" fill="none"/><path d="M24 61H15.0V9" stroke="#f5a010" stroke-width="2.800" fill="none"/><path d="M8 12L15 4L22 12z" fill="#f5a010"/></svg>
<div style="left:182px;top:43.5px;width:83px;height:82.5px;border:2px solid #f2b930"></div>
<span class="t" style="left:12px;top:140.5px;font-size:15px;color:#f0f0f0;transform:scaleX(0.9863);">直進(3段左</span>
<span class="t" style="left:38.25px;top:154.8px;font-size:15px;color:#f0f0f0;transform:scaleX(0.9750);">廻)</span>
<span class="t" style="left:100px;top:140.5px;font-size:15px;color:#f0f0f0;transform:scaleX(0.9863);">直進(3段右</span>
<span class="t" style="left:114.5px;top:154.8px;font-size:15px;color:#f0f0f0;transform:scaleX(0.8600);">廻・上)</span>
<span class="t" style="left:187.5px;top:140.5px;font-size:15px;color:#f0f0f0;transform:scaleX(0.9863);">直進(3段左</span>
<span class="t" style="left:202px;top:154.8px;font-size:15px;color:#f0f0f0;transform:scaleX(0.8600);">廻・上)</span>
<svg style="left:33px;top:176px;" width="30" height="72" viewBox="0 0 30 72"><rect x="1" y="1" width="28" height="70" fill="#14181c" stroke="#fbfbfb" stroke-width="2"/><path d="M2 5H28M2 9.3H28M2 13.6H28M2 17.9H28M2 22.2H28M2 26.5H28M2 30.8H28M2 35.1H28M2 39.4H28M2 43.7H28M2 48H28" stroke="#8d9092" stroke-width="1.1" fill="none"/><path d="M28 63L2 53M18 70L2 55" stroke="#a8abad" stroke-width=".9" fill="none"/><path d="M6 61H15.0V9" stroke="#f5a010" stroke-width="2.800" fill="none"/><path d="M8 12L15 4L22 12z" fill="#f5a010"/></svg>
<svg style="left:119.5px;top:176px;" width="33" height="72" viewBox="0 0 33 72"><rect x="1" y="1" width="31" height="70" fill="#14181c" stroke="#fbfbfb" stroke-width="2"/><path d="M2 20H31M2 24.3H31M2 28.6H31M2 32.9H31M2 37.2H31M2 41.5H31M2 45.8H31M2 50.1H31M2 54.4H31M2 58.7H31M2 63H31" stroke="#8d9092" stroke-width="1.1" fill="none"/><path d="M2 8L16.5 16M18.5 2L22.5 9M31 17L20.5 19" stroke="#a8abad" stroke-width=".9" fill="none"/><path d="M16.5 67V11H24" stroke="#f5a010" stroke-width="2.800" fill="none"/><path d="M22 4.5L29 11L22 17.5z" fill="#f5a010"/></svg>
<svg style="left:207.5px;top:176px;" width="33" height="72" viewBox="0 0 33 72"><rect x="1" y="1" width="31" height="70" fill="#14181c" stroke="#fbfbfb" stroke-width="2"/><path d="M2 20H31M2 24.3H31M2 28.6H31M2 32.9H31M2 37.2H31M2 41.5H31M2 45.8H31M2 50.1H31M2 54.4H31M2 58.7H31M2 63H31" stroke="#8d9092" stroke-width="1.1" fill="none"/><path d="M31 8L16.5 16M14.5 2L10.5 9M2 17L12.5 19" stroke="#a8abad" stroke-width=".9" fill="none"/><path d="M16.5 67V11H9" stroke="#f5a010" stroke-width="2.800" fill="none"/><path d="M11 4.5L4 11L11 17.5z" fill="#f5a010"/></svg>
<span class="t" style="left:12px;top:267.5px;font-size:15px;color:#f0f0f0;transform:scaleX(0.9863);">直進(3段右</span>
<span class="t" style="left:27px;top:281.8px;font-size:15px;color:#f0f0f0;transform:scaleX(1.1351);">廻)×2</span>
<span class="t" style="left:100px;top:267.5px;font-size:15px;color:#f0f0f0;transform:scaleX(0.9863);">直進(3段左</span>
<span class="t" style="left:115px;top:281.8px;font-size:15px;color:#f0f0f0;transform:scaleX(1.1351);">廻)×2</span>
<span class="t" style="left:187.5px;top:267.5px;font-size:15px;color:#f0f0f0;transform:scaleX(0.9863);">直進(2段右</span>
<span class="t" style="left:202.5px;top:281.8px;font-size:15px;color:#f0f0f0;transform:scaleX(1.1351);">廻)×2</span>
<svg style="left:30px;top:300px;" width="33" height="76" viewBox="0 0 33 76"><rect x="1" y="1" width="31" height="74" fill="#14181c" stroke="#fbfbfb" stroke-width="2"/><path d="M2 21H31M2 25.4H31M2 29.8H31M2 34.2H31M2 38.6H31M2 43H31M2 47.4H31M2 51.8H31" stroke="#8d9092" stroke-width="1.1" fill="none"/><path d="M2 7L13.5 14M16.5 2L19.5 8M31 17L21.5 19M2 68L31 56M12.5 74L18.5 66" stroke="#a8abad" stroke-width=".9" fill="none"/><path d="M24 65H13.5V11H23" stroke="#f5a010" stroke-width="2.800" fill="none"/><path d="M22 4.5L29 11L22 17.5z" fill="#f5a010"/></svg>
<svg style="left:118.5px;top:300px;" width="33" height="76" viewBox="0 0 33 76"><rect x="1" y="1" width="31" height="74" fill="#14181c" stroke="#fbfbfb" stroke-width="2"/><path d="M2 21H31M2 25.4H31M2 29.8H31M2 34.2H31M2 38.6H31M2 43H31M2 47.4H31M2 51.8H31" stroke="#8d9092" stroke-width="1.1" fill="none"/><path d="M31 7L19.5 14M16.5 2L13.5 8M2 17L11.5 19M31 68L2 56M20.5 74L14.5 66" stroke="#a8abad" stroke-width=".9" fill="none"/><path d="M9 65H19.5V11H10" stroke="#f5a010" stroke-width="2.800" fill="none"/><path d="M11 4.5L4 11L11 17.5z" fill="#f5a010"/></svg>
<svg style="left:207.5px;top:300px;" width="33" height="76" viewBox="0 0 33 76"><rect x="1" y="1" width="31" height="74" fill="#14181c" stroke="#fbfbfb" stroke-width="2"/><path d="M2 21H31M2 25.4H31M2 29.8H31M2 34.2H31M2 38.6H31M2 43H31M2 47.4H31M2 51.8H31" stroke="#8d9092" stroke-width="1.1" fill="none"/><path d="M2 7L13.5 14M16.5 2L19.5 8M31 17L21.5 19M2 68L31 56M12.5 74L18.5 66" stroke="#a8abad" stroke-width=".9" fill="none"/><path d="M24 65H13.5V11H23" stroke="#f5a010" stroke-width="2.800" fill="none"/><path d="M22 4.5L29 11L22 17.5z" fill="#f5a010"/></svg>
<span class="t" style="left:12px;top:394.5px;font-size:15px;color:#f0f0f0;transform:scaleX(0.9863);">直進(2段左</span>
<span class="t" style="left:27px;top:408.8px;font-size:15px;color:#f0f0f0;transform:scaleX(1.1351);">廻)×2</span>
<span class="t" style="left:100px;top:394.5px;font-size:15px;color:#f0f0f0;transform:scaleX(0.9863);">直進(3段右</span>
<span class="t" style="left:107.5px;top:408.8px;font-size:15px;color:#f0f0f0;transform:scaleX(1.0556);">廻/左廻)</span>
<span class="t" style="left:187.5px;top:394.5px;font-size:15px;color:#f0f0f0;transform:scaleX(0.9863);">直進(3段左</span>
<span class="t" style="left:195px;top:408.8px;font-size:15px;color:#f0f0f0;transform:scaleX(1.0556);">廻/右廻)</span>
<svg style="left:31px;top:427.5px;" width="33" height="76" viewBox="0 0 33 76"><rect x="1" y="1" width="31" height="74" fill="#14181c" stroke="#fbfbfb" stroke-width="2"/><path d="M2 21H31M2 25.4H31M2 29.8H31M2 34.2H31M2 38.6H31M2 43H31M2 47.4H31M2 51.8H31" stroke="#8d9092" stroke-width="1.1" fill="none"/><path d="M31 7L19.5 14M16.5 2L13.5 8M2 17L11.5 19M31 68L2 56M20.5 74L14.5 66" stroke="#a8abad" stroke-width=".9" fill="none"/><path d="M9 65H19.5V11H10" stroke="#f5a010" stroke-width="2.800" fill="none"/><path d="M11 4.5L4 11L11 17.5z" fill="#f5a010"/></svg>
<svg style="left:118px;top:427.5px;" width="33" height="76" viewBox="0 0 33 76"><rect x="1" y="1" width="31" height="74" fill="#14181c" stroke="#fbfbfb" stroke-width="2"/><path d="M2 21H31M2 25.4H31M2 29.8H31M2 34.2H31M2 38.6H31M2 43H31M2 47.4H31M2 51.8H31" stroke="#8d9092" stroke-width="1.1" fill="none"/><path d="M31 7L19.5 14M16.5 2L13.5 8M2 17L11.5 19M2 68L31 56M12.5 74L18.5 66" stroke="#a8abad" stroke-width=".9" fill="none"/><path d="M25 65H17.5V11H10" stroke="#f5a010" stroke-width="2.800" fill="none"/><path d="M11 4.5L4 11L11 17.5z" fill="#f5a010"/></svg>
<svg style="left:206px;top:427.5px;" width="33" height="76" viewBox="0 0 33 76"><rect x="1" y="1" width="31" height="74" fill="#14181c" stroke="#fbfbfb" stroke-width="2"/><path d="M2 21H31M2 25.4H31M2 29.8H31M2 34.2H31M2 38.6H31M2 43H31M2 47.4H31M2 51.8H31" stroke="#8d9092" stroke-width="1.1" fill="none"/><path d="M2 7L13.5 14M16.5 2L19.5 8M31 17L21.5 19M31 68L2 56M20.5 74L14.5 66" stroke="#a8abad" stroke-width=".9" fill="none"/><path d="M8 65H15.5V11H23" stroke="#f5a010" stroke-width="2.800" fill="none"/><path d="M22 4.5L29 11L22 17.5z" fill="#f5a010"/></svg>
<span class="t" style="left:24px;top:522px;font-size:15px;color:#f0f0f0;">L字(右)</span>
<span class="t" style="left:112px;top:522px;font-size:15px;color:#f0f0f0;">L字(左)</span>
<span class="t" style="left:191.5px;top:522px;font-size:15px;color:#f0f0f0;transform:scaleX(0.9552);">L字(3段右</span>
<span class="t" style="left:213.75px;top:536.3px;font-size:15px;color:#f0f0f0;transform:scaleX(0.9750);">廻)</span>
<svg style="left:12px;top:568px;" width="71" height="40" viewBox="0 0 71 40"><rect x="1" y="1" width="69" height="38" fill="#14181c" stroke="#fbfbfb" stroke-width="2"/><path d="M66.5 2V26M61.9 2V26M57.3 2V26M52.7 2V26M48.1 2V26M43.5 2V26M38.9 2V26M34.3 2V26M29.7 2V26" stroke="#d4d6d8" stroke-width="1.400"/><path d="M15 40V15H61" stroke="#f5a010" stroke-width="2.800" fill="none"/><path d="M59.5 8.500l8.500 6.500-8.500 6.500z" fill="#f5a010"/></svg>
<svg style="left:100.5px;top:568px;" width="71" height="40" viewBox="0 0 71 40"><rect x="1" y="1" width="69" height="38" fill="#14181c" stroke="#fbfbfb" stroke-width="2"/><path d="M4.5 2V26M9.1 2V26M13.7 2V26M18.3 2V26M22.9 2V26M27.5 2V26M32.1 2V26M36.7 2V26M41.3 2V26" stroke="#d4d6d8" stroke-width="1.400"/><path d="M56 40V15H10" stroke="#f5a010" stroke-width="2.800" fill="none"/><path d="M11.500 8.500l-8.500 6.500 8.500 6.500z" fill="#f5a010"/></svg>
<svg style="left:193.5px;top:568px;" width="61" height="40" viewBox="0 0 61 40"><rect x="1" y="1" width="59" height="38" fill="#14181c" stroke="#fbfbfb" stroke-width="2"/><path d="M56.5 2V26M51.9 2V26M47.3 2V26M42.7 2V26M38.1 2V26M33.5 2V26M28.9 2V26" stroke="#d4d6d8" stroke-width="1.400"/><path d="M2 14L16 20M13 2L21 24M16 20L14 40" stroke="#d4d6d8" stroke-width="1" fill="none"/><path d="M15 40V15H51" stroke="#f5a010" stroke-width="2.800" fill="none"/><path d="M49.5 8.500l8.500 6.500-8.500 6.500z" fill="#f5a010"/></svg>
</div>
<div style="left:178.5px;top:136px;width:109.5px;height:132.5px;border:3px solid #fe0000"></div>
<div style="left:0px;top:735px;width:299.5px;height:1px;background:#3b3f43"></div>
<span class="t" style="left:19.5px;top:752.5px;font-size:15px;color:#e8e8e8;transform:scaleX(0.8377);">階段バリアフリー基準:</span>
<div style="left:155.5px;top:749px;width:119px;height:21.5px;background:#2d3135;border:1px solid #474b50"></div>
<span class="t" style="left:159px;top:752.5px;font-size:15px;color:#e8e8e8;transform:scaleX(0.9342);">等級3</span>
<svg style="left:263.5px;top:757px;" width="9" height="6" viewBox="0 0 9 6"><path d="M.5 .5h7L4 4.500z" fill="#4a4e54"/></svg>
</div>
<div style="left:193.5px;top:924px;width:299.5px;height:5px;background:#1a1d21"></div>
<div style="left:493px;top:138px;width:2px;height:786px;background:#7e8286"></div>
<div style="left:495px;top:138px;width:758.5px;height:786px;background:#787d81"></div>
<svg style="left:521px;top:164px;" width="712" height="740" viewBox="0 0 712 740"><rect width="712" height="740" fill="#fff"/><path d="M2 12h2v2h-2zm37 0h2v2h-2zm18 0h2v2h-2zm18 0h2v2h-2zm18 0h2v2h-2zm37 0h2v2h-2zm18 0h2v2h-2zm18 0h2v2h-2zm18 0h2v2h-2zm37 0h2v2h-2zm18 0h2v2h-2zm18 0h2v2h-2zm18 0h2v2h-2zm37 0h2v2h-2zm18 0h2v2h-2zm18 0h2v2h-2zm18 0h2v2h-2zm37 0h2v2h-2zm18 0h2v2h-2zm18 0h2v2h-2zm18 0h2v2h-2zm37 0h2v2h-2zm18 0h2v2h-2zm18 0h2v2h-2zm18 0h2v2h-2zm37 0h2v2h-2zm18 0h2v2h-2zm18 0h2v2h-2zm18 0h2v2h-2zm37 0h2v2h-2zm18 0h2v2h-2zM2 30h2v2h-2zm37 0h2v2h-2zm18 0h2v2h-2zm18 0h2v2h-2zm18 0h2v2h-2zm37 0h2v2h-2zm18 0h2v2h-2zm18 0h2v2h-2zm18 0h2v2h-2zm37 0h2v2h-2zm18 0h2v2h-2zm18 0h2v2h-2zm18 0h2v2h-2zm37 0h2v2h-2zm18 0h2v2h-2zm18 0h2v2h-2zm18 0h2v2h-2zm37 0h2v2h-2zm18 0h2v2h-2zm18 0h2v2h-2zm18 0h2v2h-2zm37 0h2v2h-2zm18 0h2v2h-2zm18 0h2v2h-2zm18 0h2v2h-2zm37 0h2v2h-2zm18 0h2v2h-2zm18 0h2v2h-2zm18 0h2v2h-2zm37 0h2v2h-2zm18 0h2v2h-2zM2 48h2v2h-2zm37 0h2v2h-2zm18 0h2v2h-2zm18 0h2v2h-2zm18 0h2v2h-2zm37 0h2v2h-2zm18 0h2v2h-2zm18 0h2v2h-2zm18 0h2v2h-2zm37 0h2v2h-2zm18 0h2v2h-2zm18 0h2v2h-2zm18 0h2v2h-2zm37 0h2v2h-2zm18 0h2v2h-2zm18 0h2v2h-2zm18 0h2v2h-2zm37 0h2v2h-2zm18 0h2v2h-2zm18 0h2v2h-2zm18 0h2v2h-2zm37 0h2v2h-2zm18 0h2v2h-2zm18 0h2v2h-2zm18 0h2v2h-2zm37 0h2v2h-2zm18 0h2v2h-2zm18 0h2v2h-2zm18 0h2v2h-2zm37 0h2v2h-2zm18 0h2v2h-2zM2 85h2v2h-2zm37 0h2v2h-2zm18 0h2v2h-2zm18 0h2v2h-2zm18 0h2v2h-2zm37 0h2v2h-2zm18 0h2v2h-2zm18 0h2v2h-2zm18 0h2v2h-2zm37 0h2v2h-2zm18 0h2v2h-2zm18 0h2v2h-2zm18 0h2v2h-2zm37 0h2v2h-2zm18 0h2v2h-2zm18 0h2v2h-2zm18 0h2v2h-2zm37 0h2v2h-2zm18 0h2v2h-2zm18 0h2v2h-2zm18 0h2v2h-2zm37 0h2v2h-2zm18 0h2v2h-2zm18 0h2v2h-2zm18 0h2v2h-2zm37 0h2v2h-2zm18 0h2v2h-2zm18 0h2v2h-2zm18 0h2v2h-2zm37 0h2v2h-2zm18 0h2v2h-2zM2 103h2v2h-2zm37 0h2v2h-2zm18 0h2v2h-2zm18 0h2v2h-2zm18 0h2v2h-2zm37 0h2v2h-2zm18 0h2v2h-2zm18 0h2v2h-2zm18 0h2v2h-2zm37 0h2v2h-2zm18 0h2v2h-2zm18 0h2v2h-2zm18 0h2v2h-2zm37 0h2v2h-2zm18 0h2v2h-2zm18 0h2v2h-2zm18 0h2v2h-2zm37 0h2v2h-2zm18 0h2v2h-2zm18 0h2v2h-2zm18 0h2v2h-2zm37 0h2v2h-2zm18 0h2v2h-2zm18 0h2v2h-2zm18 0h2v2h-2zm37 0h2v2h-2zm18 0h2v2h-2zm18 0h2v2h-2zm18 0h2v2h-2zm37 0h2v2h-2zm18 0h2v2h-2zM2 121h2v2h-2zm37 0h2v2h-2zm18 0h2v2h-2zm18 0h2v2h-2zm18 0h2v2h-2zm37 0h2v2h-2zm18 0h2v2h-2zm18 0h2v2h-2zm18 0h2v2h-2zm37 0h2v2h-2zm18 0h2v2h-2zm18 0h2v2h-2zm18 0h2v2h-2zm37 0h2v2h-2zm18 0h2v2h-2zm18 0h2v2h-2zm18 0h2v2h-2zm37 0h2v2h-2zm18 0h2v2h-2zm18 0h2v2h-2zm18 0h2v2h-2zm37 0h2v2h-2zm18 0h2v2h-2zm18 0h2v2h-2zm18 0h2v2h-2zm37 0h2v2h-2zm18 0h2v2h-2zm18 0h2v2h-2zm18 0h2v2h-2zm37 0h2v2h-2zm18 0h2v2h-2zM2 139h2v2h-2zm37 0h2v2h-2zm18 0h2v2h-2zm18 0h2v2h-2zm18 0h2v2h-2zm37 0h2v2h-2zm18 0h2v2h-2zm18 0h2v2h-2zm18 0h2v2h-2zm37 0h2v2h-2zm18 0h2v2h-2zm18 0h2v2h-2zm18 0h2v2h-2zm37 0h2v2h-2zm18 0h2v2h-2zm18 0h2v2h-2zm18 0h2v2h-2zm37 0h2v2h-2zm18 0h2v2h-2zm18 0h2v2h-2zm18 0h2v2h-2zm37 0h2v2h-2zm18 0h2v2h-2zm18 0h2v2h-2zm18 0h2v2h-2zm37 0h2v2h-2zm18 0h2v2h-2zm18 0h2v2h-2zm18 0h2v2h-2zm37 0h2v2h-2zm18 0h2v2h-2zM2 176h2v2h-2zm37 0h2v2h-2zm18 0h2v2h-2zm18 0h2v2h-2zm18 0h2v2h-2zm37 0h2v2h-2zm18 0h2v2h-2zm18 0h2v2h-2zm18 0h2v2h-2zm37 0h2v2h-2zm18 0h2v2h-2zm18 0h2v2h-2zm18 0h2v2h-2zm37 0h2v2h-2zm18 0h2v2h-2zm18 0h2v2h-2zm18 0h2v2h-2zm37 0h2v2h-2zm18 0h2v2h-2zm18 0h2v2h-2zm18 0h2v2h-2zm37 0h2v2h-2zm18 0h2v2h-2zm18 0h2v2h-2zm18 0h2v2h-2zm37 0h2v2h-2zm18 0h2v2h-2zm18 0h2v2h-2zm18 0h2v2h-2zm37 0h2v2h-2zm18 0h2v2h-2zM2 194h2v2h-2zm37 0h2v2h-2zm18 0h2v2h-2zm18 0h2v2h-2zm18 0h2v2h-2zm37 0h2v2h-2zm18 0h2v2h-2zm18 0h2v2h-2zm18 0h2v2h-2zm37 0h2v2h-2zm18 0h2v2h-2zm18 0h2v2h-2zm18 0h2v2h-2zm37 0h2v2h-2zm18 0h2v2h-2zm18 0h2v2h-2zm18 0h2v2h-2zm37 0h2v2h-2zm18 0h2v2h-2zm18 0h2v2h-2zm18 0h2v2h-2zm37 0h2v2h-2zm18 0h2v2h-2zm18 0h2v2h-2zm18 0h2v2h-2zm37 0h2v2h-2zm18 0h2v2h-2zm18 0h2v2h-2zm18 0h2v2h-2zm37 0h2v2h-2zm18 0h2v2h-2zM2 212h2v2h-2zm37 0h2v2h-2zm18 0h2v2h-2zm18 0h2v2h-2zm18 0h2v2h-2zm37 0h2v2h-2zm18 0h2v2h-2zm18 0h2v2h-2zm18 0h2v2h-2zm37 0h2v2h-2zm18 0h2v2h-2zm18 0h2v2h-2zm18 0h2v2h-2zm37 0h2v2h-2zm18 0h2v2h-2zm18 0h2v2h-2zm18 0h2v2h-2zm37 0h2v2h-2zm18 0h2v2h-2zm18 0h2v2h-2zm18 0h2v2h-2zm37 0h2v2h-2zm18 0h2v2h-2zm18 0h2v2h-2zm18 0h2v2h-2zm37 0h2v2h-2zm18 0h2v2h-2zm18 0h2v2h-2zm18 0h2v2h-2zm37 0h2v2h-2zm18 0h2v2h-2zM2 230h2v2h-2zm37 0h2v2h-2zm18 0h2v2h-2zm18 0h2v2h-2zm18 0h2v2h-2zm37 0h2v2h-2zm18 0h2v2h-2zm18 0h2v2h-2zm18 0h2v2h-2zm37 0h2v2h-2zm18 0h2v2h-2zm18 0h2v2h-2zm18 0h2v2h-2zm37 0h2v2h-2zm18 0h2v2h-2zm18 0h2v2h-2zm18 0h2v2h-2zm37 0h2v2h-2zm18 0h2v2h-2zm18 0h2v2h-2zm18 0h2v2h-2zm37 0h2v2h-2zm18 0h2v2h-2zm18 0h2v2h-2zm18 0h2v2h-2zm37 0h2v2h-2zm18 0h2v2h-2zm18 0h2v2h-2zm18 0h2v2h-2zm37 0h2v2h-2zm18 0h2v2h-2zM2 267h2v2h-2zm37 0h2v2h-2zm18 0h2v2h-2zm18 0h2v2h-2zm18 0h2v2h-2zm37 0h2v2h-2zm18 0h2v2h-2zm18 0h2v2h-2zm18 0h2v2h-2zm37 0h2v2h-2zm18 0h2v2h-2zm18 0h2v2h-2zm18 0h2v2h-2zm37 0h2v2h-2zm18 0h2v2h-2zm18 0h2v2h-2zm18 0h2v2h-2zm37 0h2v2h-2zm18 0h2v2h-2zm18 0h2v2h-2zm18 0h2v2h-2zm37 0h2v2h-2zm18 0h2v2h-2zm18 0h2v2h-2zm18 0h2v2h-2zm37 0h2v2h-2zm18 0h2v2h-2zm18 0h2v2h-2zm18 0h2v2h-2zm37 0h2v2h-2zm18 0h2v2h-2zM2 285h2v2h-2zm37 0h2v2h-2zm18 0h2v2h-2zm18 0h2v2h-2zm18 0h2v2h-2zm37 0h2v2h-2zm18 0h2v2h-2zm18 0h2v2h-2zm18 0h2v2h-2zm37 0h2v2h-2zm18 0h2v2h-2zm18 0h2v2h-2zm18 0h2v2h-2zm37 0h2v2h-2zm18 0h2v2h-2zm18 0h2v2h-2zm18 0h2v2h-2zm37 0h2v2h-2zm18 0h2v2h-2zm18 0h2v2h-2zm18 0h2v2h-2zm37 0h2v2h-2zm18 0h2v2h-2zm18 0h2v2h-2zm18 0h2v2h-2zm37 0h2v2h-2zm18 0h2v2h-2zm18 0h2v2h-2zm18 0h2v2h-2zm37 0h2v2h-2zm18 0h2v2h-2zM2 303h2v2h-2zm37 0h2v2h-2zm18 0h2v2h-2zm18 0h2v2h-2zm18 0h2v2h-2zm37 0h2v2h-2zm18 0h2v2h-2zm18 0h2v2h-2zm18 0h2v2h-2zm37 0h2v2h-2zm18 0h2v2h-2zm18 0h2v2h-2zm18 0h2v2h-2zm37 0h2v2h-2zm18 0h2v2h-2zm18 0h2v2h-2zm18 0h2v2h-2zm37 0h2v2h-2zm18 0h2v2h-2zm18 0h2v2h-2zm18 0h2v2h-2zm37 0h2v2h-2zm18 0h2v2h-2zm18 0h2v2h-2zm18 0h2v2h-2zm37 0h2v2h-2zm18 0h2v2h-2zm18 0h2v2h-2zm18 0h2v2h-2zm37 0h2v2h-2zm18 0h2v2h-2zM2 321h2v2h-2zm37 0h2v2h-2zm18 0h2v2h-2zm18 0h2v2h-2zm18 0h2v2h-2zm37 0h2v2h-2zm18 0h2v2h-2zm18 0h2v2h-2zm18 0h2v2h-2zm37 0h2v2h-2zm18 0h2v2h-2zm18 0h2v2h-2zm18 0h2v2h-2zm37 0h2v2h-2zm18 0h2v2h-2zm18 0h2v2h-2zm18 0h2v2h-2zm37 0h2v2h-2zm18 0h2v2h-2zm18 0h2v2h-2zm18 0h2v2h-2zm37 0h2v2h-2zm18 0h2v2h-2zm18 0h2v2h-2zm18 0h2v2h-2zm37 0h2v2h-2zm18 0h2v2h-2zm18 0h2v2h-2zm18 0h2v2h-2zm37 0h2v2h-2zm18 0h2v2h-2zM2 358h2v2h-2zm37 0h2v2h-2zm18 0h2v2h-2zm18 0h2v2h-2zm18 0h2v2h-2zm37 0h2v2h-2zm18 0h2v2h-2zm18 0h2v2h-2zm18 0h2v2h-2zm37 0h2v2h-2zm18 0h2v2h-2zm18 0h2v2h-2zm18 0h2v2h-2zm37 0h2v2h-2zm18 0h2v2h-2zm18 0h2v2h-2zm18 0h2v2h-2zm37 0h2v2h-2zm18 0h2v2h-2zm18 0h2v2h-2zm18 0h2v2h-2zm37 0h2v2h-2zm18 0h2v2h-2zm18 0h2v2h-2zm18 0h2v2h-2zm37 0h2v2h-2zm18 0h2v2h-2zm18 0h2v2h-2zm18 0h2v2h-2zm37 0h2v2h-2zm18 0h2v2h-2zM2 376h2v2h-2zm37 0h2v2h-2zm18 0h2v2h-2zm18 0h2v2h-2zm18 0h2v2h-2zm37 0h2v2h-2zm18 0h2v2h-2zm18 0h2v2h-2zm18 0h2v2h-2zm37 0h2v2h-2zm18 0h2v2h-2zm18 0h2v2h-2zm18 0h2v2h-2zm37 0h2v2h-2zm18 0h2v2h-2zm18 0h2v2h-2zm18 0h2v2h-2zm37 0h2v2h-2zm18 0h2v2h-2zm18 0h2v2h-2zm18 0h2v2h-2zm37 0h2v2h-2zm18 0h2v2h-2zm18 0h2v2h-2zm18 0h2v2h-2zm37 0h2v2h-2zm18 0h2v2h-2zm18 0h2v2h-2zm18 0h2v2h-2zm37 0h2v2h-2zm18 0h2v2h-2zM2 394h2v2h-2zm37 0h2v2h-2zm18 0h2v2h-2zm18 0h2v2h-2zm18 0h2v2h-2zm37 0h2v2h-2zm18 0h2v2h-2zm18 0h2v2h-2zm18 0h2v2h-2zm37 0h2v2h-2zm18 0h2v2h-2zm18 0h2v2h-2zm18 0h2v2h-2zm37 0h2v2h-2zm18 0h2v2h-2zm18 0h2v2h-2zm18 0h2v2h-2zm37 0h2v2h-2zm18 0h2v2h-2zm18 0h2v2h-2zm18 0h2v2h-2zm37 0h2v2h-2zm18 0h2v2h-2zm18 0h2v2h-2zm18 0h2v2h-2zm37 0h2v2h-2zm18 0h2v2h-2zm18 0h2v2h-2zm18 0h2v2h-2zm37 0h2v2h-2zm18 0h2v2h-2zM2 412h2v2h-2zm37 0h2v2h-2zm18 0h2v2h-2zm18 0h2v2h-2zm18 0h2v2h-2zm37 0h2v2h-2zm18 0h2v2h-2zm18 0h2v2h-2zm18 0h2v2h-2zm37 0h2v2h-2zm18 0h2v2h-2zm18 0h2v2h-2zm18 0h2v2h-2zm37 0h2v2h-2zm18 0h2v2h-2zm18 0h2v2h-2zm18 0h2v2h-2zm37 0h2v2h-2zm18 0h2v2h-2zm18 0h2v2h-2zm18 0h2v2h-2zm37 0h2v2h-2zm18 0h2v2h-2zm18 0h2v2h-2zm18 0h2v2h-2zm37 0h2v2h-2zm18 0h2v2h-2zm18 0h2v2h-2zm18 0h2v2h-2zm37 0h2v2h-2zm18 0h2v2h-2zM2 449h2v2h-2zm37 0h2v2h-2zm18 0h2v2h-2zm18 0h2v2h-2zm18 0h2v2h-2zm37 0h2v2h-2zm18 0h2v2h-2zm18 0h2v2h-2zm18 0h2v2h-2zm37 0h2v2h-2zm18 0h2v2h-2zm18 0h2v2h-2zm18 0h2v2h-2zm37 0h2v2h-2zm18 0h2v2h-2zm18 0h2v2h-2zm18 0h2v2h-2zm37 0h2v2h-2zm18 0h2v2h-2zm18 0h2v2h-2zm18 0h2v2h-2zm37 0h2v2h-2zm18 0h2v2h-2zm18 0h2v2h-2zm18 0h2v2h-2zm37 0h2v2h-2zm18 0h2v2h-2zm18 0h2v2h-2zm18 0h2v2h-2zm37 0h2v2h-2zm18 0h2v2h-2zM2 467h2v2h-2zm37 0h2v2h-2zm18 0h2v2h-2zm18 0h2v2h-2zm18 0h2v2h-2zm37 0h2v2h-2zm18 0h2v2h-2zm18 0h2v2h-2zm18 0h2v2h-2zm37 0h2v2h-2zm18 0h2v2h-2zm18 0h2v2h-2zm18 0h2v2h-2zm37 0h2v2h-2zm18 0h2v2h-2zm18 0h2v2h-2zm18 0h2v2h-2zm37 0h2v2h-2zm18 0h2v2h-2zm18 0h2v2h-2zm18 0h2v2h-2zm37 0h2v2h-2zm18 0h2v2h-2zm18 0h2v2h-2zm18 0h2v2h-2zm37 0h2v2h-2zm18 0h2v2h-2zm18 0h2v2h-2zm18 0h2v2h-2zm37 0h2v2h-2zm18 0h2v2h-2zM2 485h2v2h-2zm37 0h2v2h-2zm18 0h2v2h-2zm18 0h2v2h-2zm18 0h2v2h-2zm37 0h2v2h-2zm18 0h2v2h-2zm18 0h2v2h-2zm18 0h2v2h-2zm37 0h2v2h-2zm18 0h2v2h-2zm18 0h2v2h-2zm18 0h2v2h-2zm37 0h2v2h-2zm18 0h2v2h-2zm18 0h2v2h-2zm18 0h2v2h-2zm37 0h2v2h-2zm18 0h2v2h-2zm18 0h2v2h-2zm18 0h2v2h-2zm37 0h2v2h-2zm18 0h2v2h-2zm18 0h2v2h-2zm18 0h2v2h-2zm37 0h2v2h-2zm18 0h2v2h-2zm18 0h2v2h-2zm18 0h2v2h-2zm37 0h2v2h-2zm18 0h2v2h-2zM2 503h2v2h-2zm37 0h2v2h-2zm18 0h2v2h-2zm18 0h2v2h-2zm18 0h2v2h-2zm37 0h2v2h-2zm18 0h2v2h-2zm18 0h2v2h-2zm18 0h2v2h-2zm37 0h2v2h-2zm18 0h2v2h-2zm18 0h2v2h-2zm18 0h2v2h-2zm37 0h2v2h-2zm18 0h2v2h-2zm18 0h2v2h-2zm18 0h2v2h-2zm37 0h2v2h-2zm18 0h2v2h-2zm18 0h2v2h-2zm18 0h2v2h-2zm37 0h2v2h-2zm18 0h2v2h-2zm18 0h2v2h-2zm18 0h2v2h-2zm37 0h2v2h-2zm18 0h2v2h-2zm18 0h2v2h-2zm18 0h2v2h-2zm37 0h2v2h-2zm18 0h2v2h-2zM2 540h2v2h-2zm37 0h2v2h-2zm18 0h2v2h-2zm18 0h2v2h-2zm18 0h2v2h-2zm37 0h2v2h-2zm18 0h2v2h-2zm18 0h2v2h-2zm18 0h2v2h-2zm37 0h2v2h-2zm18 0h2v2h-2zm18 0h2v2h-2zm18 0h2v2h-2zm37 0h2v2h-2zm18 0h2v2h-2zm18 0h2v2h-2zm18 0h2v2h-2zm37 0h2v2h-2zm18 0h2v2h-2zm18 0h2v2h-2zm18 0h2v2h-2zm37 0h2v2h-2zm18 0h2v2h-2zm18 0h2v2h-2zm18 0h2v2h-2zm37 0h2v2h-2zm18 0h2v2h-2zm18 0h2v2h-2zm18 0h2v2h-2zm37 0h2v2h-2zm18 0h2v2h-2zM2 558h2v2h-2zm37 0h2v2h-2zm18 0h2v2h-2zm18 0h2v2h-2zm18 0h2v2h-2zm37 0h2v2h-2zm18 0h2v2h-2zm18 0h2v2h-2zm18 0h2v2h-2zm37 0h2v2h-2zm18 0h2v2h-2zm18 0h2v2h-2zm18 0h2v2h-2zm37 0h2v2h-2zm18 0h2v2h-2zm18 0h2v2h-2zm18 0h2v2h-2zm37 0h2v2h-2zm18 0h2v2h-2zm18 0h2v2h-2zm18 0h2v2h-2zm37 0h2v2h-2zm18 0h2v2h-2zm18 0h2v2h-2zm18 0h2v2h-2zm37 0h2v2h-2zm18 0h2v2h-2zm18 0h2v2h-2zm18 0h2v2h-2zm37 0h2v2h-2zm18 0h2v2h-2zM2 576h2v2h-2zm37 0h2v2h-2zm18 0h2v2h-2zm18 0h2v2h-2zm18 0h2v2h-2zm37 0h2v2h-2zm18 0h2v2h-2zm18 0h2v2h-2zm18 0h2v2h-2zm37 0h2v2h-2zm18 0h2v2h-2zm18 0h2v2h-2zm18 0h2v2h-2zm37 0h2v2h-2zm18 0h2v2h-2zm18 0h2v2h-2zm18 0h2v2h-2zm37 0h2v2h-2zm18 0h2v2h-2zm18 0h2v2h-2zm18 0h2v2h-2zm37 0h2v2h-2zm18 0h2v2h-2zm18 0h2v2h-2zm18 0h2v2h-2zm37 0h2v2h-2zm18 0h2v2h-2zm18 0h2v2h-2zm18 0h2v2h-2zm37 0h2v2h-2zm18 0h2v2h-2zM2 594h2v2h-2zm37 0h2v2h-2zm18 0h2v2h-2zm18 0h2v2h-2zm18 0h2v2h-2zm37 0h2v2h-2zm18 0h2v2h-2zm18 0h2v2h-2zm18 0h2v2h-2zm37 0h2v2h-2zm18 0h2v2h-2zm18 0h2v2h-2zm18 0h2v2h-2zm37 0h2v2h-2zm18 0h2v2h-2zm18 0h2v2h-2zm18 0h2v2h-2zm37 0h2v2h-2zm18 0h2v2h-2zm18 0h2v2h-2zm18 0h2v2h-2zm37 0h2v2h-2zm18 0h2v2h-2zm18 0h2v2h-2zm18 0h2v2h-2zm37 0h2v2h-2zm18 0h2v2h-2zm18 0h2v2h-2zm18 0h2v2h-2zm37 0h2v2h-2zm18 0h2v2h-2zM2 631h2v2h-2zm37 0h2v2h-2zm18 0h2v2h-2zm18 0h2v2h-2zm18 0h2v2h-2zm37 0h2v2h-2zm18 0h2v2h-2zm18 0h2v2h-2zm18 0h2v2h-2zm37 0h2v2h-2zm18 0h2v2h-2zm18 0h2v2h-2zm18 0h2v2h-2zm37 0h2v2h-2zm18 0h2v2h-2zm18 0h2v2h-2zm18 0h2v2h-2zm37 0h2v2h-2zm18 0h2v2h-2zm18 0h2v2h-2zm18 0h2v2h-2zm37 0h2v2h-2zm18 0h2v2h-2zm18 0h2v2h-2zm18 0h2v2h-2zm37 0h2v2h-2zm18 0h2v2h-2zm18 0h2v2h-2zm18 0h2v2h-2zm37 0h2v2h-2zm18 0h2v2h-2zM2 649h2v2h-2zm37 0h2v2h-2zm18 0h2v2h-2zm18 0h2v2h-2zm18 0h2v2h-2zm37 0h2v2h-2zm18 0h2v2h-2zm18 0h2v2h-2zm18 0h2v2h-2zm37 0h2v2h-2zm18 0h2v2h-2zm18 0h2v2h-2zm18 0h2v2h-2zm37 0h2v2h-2zm18 0h2v2h-2zm18 0h2v2h-2zm18 0h2v2h-2zm37 0h2v2h-2zm18 0h2v2h-2zm18 0h2v2h-2zm18 0h2v2h-2zm37 0h2v2h-2zm18 0h2v2h-2zm18 0h2v2h-2zm18 0h2v2h-2zm37 0h2v2h-2zm18 0h2v2h-2zm18 0h2v2h-2zm18 0h2v2h-2zm37 0h2v2h-2zm18 0h2v2h-2zM2 667h2v2h-2zm37 0h2v2h-2zm18 0h2v2h-2zm18 0h2v2h-2zm18 0h2v2h-2zm37 0h2v2h-2zm18 0h2v2h-2zm18 0h2v2h-2zm18 0h2v2h-2zm37 0h2v2h-2zm18 0h2v2h-2zm18 0h2v2h-2zm18 0h2v2h-2zm37 0h2v2h-2zm18 0h2v2h-2zm18 0h2v2h-2zm18 0h2v2h-2zm37 0h2v2h-2zm18 0h2v2h-2zm18 0h2v2h-2zm18 0h2v2h-2zm37 0h2v2h-2zm18 0h2v2h-2zm18 0h2v2h-2zm18 0h2v2h-2zm37 0h2v2h-2zm18 0h2v2h-2zm18 0h2v2h-2zm18 0h2v2h-2zm37 0h2v2h-2zm18 0h2v2h-2zM2 685h2v2h-2zm37 0h2v2h-2zm18 0h2v2h-2zm18 0h2v2h-2zm18 0h2v2h-2zm37 0h2v2h-2zm18 0h2v2h-2zm18 0h2v2h-2zm18 0h2v2h-2zm37 0h2v2h-2zm18 0h2v2h-2zm18 0h2v2h-2zm18 0h2v2h-2zm37 0h2v2h-2zm18 0h2v2h-2zm18 0h2v2h-2zm18 0h2v2h-2zm37 0h2v2h-2zm18 0h2v2h-2zm18 0h2v2h-2zm18 0h2v2h-2zm37 0h2v2h-2zm18 0h2v2h-2zm18 0h2v2h-2zm18 0h2v2h-2zm37 0h2v2h-2zm18 0h2v2h-2zm18 0h2v2h-2zm18 0h2v2h-2zm37 0h2v2h-2zm18 0h2v2h-2zM2 722h2v2h-2zm37 0h2v2h-2zm18 0h2v2h-2zm18 0h2v2h-2zm18 0h2v2h-2zm37 0h2v2h-2zm18 0h2v2h-2zm18 0h2v2h-2zm18 0h2v2h-2zm37 0h2v2h-2zm18 0h2v2h-2zm18 0h2v2h-2zm18 0h2v2h-2zm37 0h2v2h-2zm18 0h2v2h-2zm18 0h2v2h-2zm18 0h2v2h-2zm37 0h2v2h-2zm18 0h2v2h-2zm18 0h2v2h-2zm18 0h2v2h-2zm37 0h2v2h-2zm18 0h2v2h-2zm18 0h2v2h-2zm18 0h2v2h-2zm37 0h2v2h-2zm18 0h2v2h-2zm18 0h2v2h-2zm18 0h2v2h-2zm37 0h2v2h-2zm18 0h2v2h-2z" fill="#bdbdbd"/><path d="M112.5 0V740M203.5 0V740M294.5 0V740M385.5 0V740M567.5 0V740M658.5 0V740M0 68.5H712M0 159.5H712M0 250.5H712M0 432.5H712M0 523.5H712M0 614.5H712M0 705.5H712" stroke="#c0c0c0" stroke-width="1" stroke-dasharray="2 2" stroke-dashoffset="1" fill="none"/><path d="M21.5 0V740M476.5 0V740M0 341.5H712" stroke="#c6c6c6" stroke-width="1.100" fill="none"/><rect x="710.5" y="0" width="2" height="740" fill="#fff"/><path d="M384.8 341.4L567.7 341.4" stroke="#0a8a0a" stroke-width="1.300"/><path d="M198.5 154H481.7V528.5H198.5z M209.2 164.5V517.5H471.2V164.5z" fill="#000" fill-rule="evenodd"/><path d="M204 336.6L375.6 336.6L373.8 426.4L474 428L474 438L363.6 437L364 346.8L204 346.8z" fill="#000"/><path d="M294.5 432.7V517.5M317.5 432.7V517.5M340.5 432.7V517.5M363.5 432.7V517.5M386.5 432.7V517.5M432.5 437V477.5M249.5 477.5H432.5M249.5 432.7V477.5M240 447.5L249.5 433L259 447.5M209.3 517.5L294.5 432.7M390.9 437L471.3 517.5" stroke="#111" stroke-width="1" fill="none"/><text x="289.5" y="306" font-size="33" fill="#000" textLength="101.500" lengthAdjust="spacingAndGlyphs" font-family='"Liberation Sans","Noto Sans CJK JP",sans-serif'>ホール</text><text x="412.5" y="399.5" font-size="25.500" fill="#3a3a3a" textLength="37" lengthAdjust="spacingAndGlyphs" font-family='"Liberation Sans",sans-serif'>UP</text><text x="230.5" y="480.5" font-size="25.500" fill="#3a3a3a" textLength="37" lengthAdjust="spacingAndGlyphs" font-family='"Liberation Sans",sans-serif'>UP</text><path d="M204.4 341.4H363.5V432.7H204.4zM295.2 341.4V432.7M318.2 341.4V432.7M340.7 341.4V432.7M249.9 386.2V432.7M249.9 386.2H359M204.4 341.4L295.2 432.7M347 377.5L359 386.2L347 395.5" stroke="#ff1a0a" stroke-width="1.100" fill="none"/><circle cx="204.4" cy="341.4" r="4.700" fill="#19e9f2" stroke="#e06a5a" stroke-width=".7"/><circle cx="363.5" cy="341.4" r="4.700" fill="#19e9f2" stroke="#e06a5a" stroke-width=".7"/><circle cx="204.4" cy="432.7" r="4.700" fill="#19e9f2" stroke="#e06a5a" stroke-width=".7"/><circle cx="363.5" cy="432.7" r="4.700" fill="#19e9f2" stroke="#e06a5a" stroke-width=".7"/><rect x="279.3" y="336.4" width="10" height="10" fill="#ffee00" stroke="#e8301a" stroke-width=".9"/><rect x="199.4" y="381.2" width="10" height="10" fill="#ffee00" stroke="#e8301a" stroke-width=".9"/><rect x="358.5" y="381.2" width="10" height="10" fill="#ffee00" stroke="#e8301a" stroke-width=".9"/><rect x="279.3" y="427.7" width="10" height="10" fill="#ffee00" stroke="#e8301a" stroke-width=".9"/></svg>
<svg style="left:495px;top:138px;" width="738" height="26" viewBox="0 0 738 26"><path d="M29.3 23V25M47.5 15V25M65.7 23V25M83.9 23V25M102.1 23V25M120.3 23V25M138.5 15V25M156.7 23V25M174.9 23V25M193.1 23V25M211.3 23V25M229.5 15V25M247.7 23V25M265.9 23V25M284.1 23V25M302.3 23V25M320.5 15V25M338.7 23V25M356.9 23V25M375.1 23V25M393.3 23V25M411.5 15V25M429.7 23V25M447.9 23V25M466.1 23V25M484.3 23V25M502.5 15V25M520.7 23V25M538.9 23V25M557.1 23V25M575.3 23V25M593.5 15V25M611.7 23V25M629.9 23V25M648.1 23V25M666.3 23V25M684.5 15V25M702.7 23V25M720.9 23V25" stroke="#fff" stroke-width="1.400" fill="none"/></svg>
<svg style="left:495px;top:164px;" width="26" height="740" viewBox="0 0 26 740"><path d="M23 13.6H25.200M23 31.8H25.200M23 50H25.200M15 68.2H24.500M23 86.4H25.200M23 104.6H25.200M23 122.8H25.200M23 141H25.200M15 159.2H24.500M23 177.4H25.200M23 195.6H25.200M23 213.8H25.200M23 232H25.200M15 250.2H24.500M23 268.4H25.200M23 286.6H25.200M23 304.8H25.200M23 323H25.200M15 341.2H24.500M23 359.4H25.200M23 377.6H25.200M23 395.8H25.200M23 414H25.200M15 432.2H24.500M23 450.4H25.200M23 468.6H25.200M23 486.8H25.200M23 505H25.200M15 523.2H24.500M23 541.4H25.200M23 559.6H25.200M23 577.8H25.200M23 596H25.200M15 614.2H24.500M23 632.4H25.200M23 650.6H25.200M23 668.8H25.200M23 687H25.200M15 705.2H24.500M23 723.4H25.200" stroke="#fff" stroke-width="1.400" fill="none"/></svg>
<div style="left:1233px;top:164px;width:20px;height:760px;background:#f0f0f0"></div>
<div style="left:521px;top:904px;width:732px;height:20px;background:#f0f0f0"></div>
<div style="left:1233px;top:523px;width:19.5px;height:20.5px;background:#cdcdcd"></div>
<div style="left:853px;top:905px;width:21px;height:19px;background:#cdcdcd"></div>
<svg style="left:1237px;top:170px;" width="12" height="9" viewBox="0 0 12 9"><path d="M1.500 7L6 2.500 10.500 7" stroke="#4c4c4c" stroke-width="2.200" fill="none"/></svg>
<svg style="left:1237px;top:887px;" width="12" height="9" viewBox="0 0 12 9"><path d="M1.500 2L6 6.500 10.500 2" stroke="#4c4c4c" stroke-width="2.200" fill="none"/></svg>
<svg style="left:526px;top:908px;" width="9" height="12" viewBox="0 0 9 12"><path d="M7 1.500L2.500 6 7 10.500" stroke="#4c4c4c" stroke-width="2.200" fill="none"/></svg>
<svg style="left:1217px;top:908px;" width="9" height="12" viewBox="0 0 9 12"><path d="M2 1.500L6.500 6 2 10.500" stroke="#4c4c4c" stroke-width="2.200" fill="none"/></svg>
<div style="left:495px;top:924px;width:758.5px;height:5px;background:#1a1d21"></div>
<div style="left:1253px;top:138px;width:5.7px;height:791px;background:#16191c"></div>
<div style="left:1258.7px;top:138px;width:251px;height:791px;background:#1f2328;overflow:hidden">
<span class="t" style="left:7.8px;top:3px;font-size:14px;color:#f2f2f2;transform:scaleX(0.9208);">L字階段プロパティ</span>
<svg style="left:219.8px;top:-2.5px;" width="21" height="21.5" viewBox="0 0 21 21.5"><rect x=".7" y=".7" width="19.600" height="20.100" fill="#1a1d20" stroke="#f0f0f0" stroke-width="1.400"/><rect x="15.500" y="1.500" width="4" height="18.500" fill="#f2b824"/><path d="M4.500 3.500v14.500L13.500 10.700z" fill="#f0f0f0"/></svg>
<div style="left:0px;top:23.5px;width:251px;height:1.2px;background:#5a5f64"></div>
<span class="t" style="left:7.3px;top:35.5px;font-size:14px;color:#f5c02c;">段数</span>
<span class="t" style="left:7.3px;top:62px;font-size:14px;color:#f2f2f2;transform:scaleX(1.0761);">総段数:</span>
<div class="inp" style="left:70.3px;top:57.5px;width:79.5px;height:23px;"></div>
<span class="t" style="left:138.8px;top:63px;font-size:13px;color:#000;">6</span>
<div class="sp" style="left:155.3px;top:57.5px;width:17px;height:10.5px;"></div>
<div class="sp" style="left:155.3px;top:69.8px;width:17px;height:10.5px;"></div>
<svg style="left:155.3px;top:57.5px;" width="17" height="10.5" viewBox="0 0 17 10.5"><path d="M5.500 6.800h6L8.500 3.600z" fill="#e8e8e8"/></svg>
<svg style="left:155.3px;top:69.8px;" width="17" height="10.5" viewBox="0 0 17 10.5"><path d="M5.500 3.600h6L8.500 6.800z" fill="#e8e8e8"/></svg>
<span class="t" style="left:7.3px;top:89.5px;font-size:14px;color:#f2f2f2;transform:scaleX(1.1094);">直進部/上:</span>
<div class="inp" style="left:110.8px;top:85px;width:79px;height:22.5px;"></div>
<span class="t" style="left:178.8px;top:90.25px;font-size:13px;color:#000;">4</span>
<div class="sp" style="left:195.8px;top:85px;width:17px;height:10.5px;"></div>
<div class="sp" style="left:195.8px;top:97.3px;width:17px;height:10.5px;"></div>
<svg style="left:195.8px;top:85px;" width="17" height="10.5" viewBox="0 0 17 10.5"><path d="M5.500 6.800h6L8.500 3.600z" fill="#e8e8e8"/></svg>
<svg style="left:195.8px;top:97.3px;" width="17" height="10.5" viewBox="0 0 17 10.5"><path d="M5.500 3.600h6L8.500 6.800z" fill="#e8e8e8"/></svg>
<span class="t" style="left:7.3px;top:117px;font-size:14px;color:#f2f2f2;transform:scaleX(0.9348);">廻り部:</span>
<div class="dd" style="left:110.1px;top:112.5px;width:112px;height:22px;"></div>
<span class="t" style="left:115.1px;top:117px;font-size:14px;color:#f2f2f2;transform:scaleX(1.0455);">2段</span>
<svg style="left:205.6px;top:118.5px;" width="12" height="11" viewBox="0 0 12 11"><path d="M.5 .5h11L6 10z" fill="#6a6e73"/></svg>
<svg style="left:110.8px;top:142.7px;" width="14" height="14" viewBox="0 0 14 14"><circle cx="7" cy="7" r="6.200" fill="#fff" stroke="#8a8a8a" stroke-width="1"/></svg>
<span class="t" style="left:128.3px;top:142.7px;font-size:14px;color:#f2f2f2;transform:scaleX(0.8929);">左廻り</span>
<svg style="left:171.1px;top:142.7px;" width="14" height="14" viewBox="0 0 14 14"><circle cx="7" cy="7" r="6.200" fill="#fff" stroke="#8a8a8a" stroke-width="1"/><circle cx="7" cy="7" r="3.300" fill="#000"/></svg>
<span class="t" style="left:189.3px;top:142.7px;font-size:14px;color:#f2f2f2;transform:scaleX(0.9286);">右廻り</span>
<span class="t" style="left:7.3px;top:172px;font-size:14px;color:#f2f2f2;transform:scaleX(1.1094);">直進部/下:</span>
<div class="inp" style="left:110.8px;top:167.5px;width:79px;height:22.5px;"></div>
<span class="t" style="left:178.8px;top:172.75px;font-size:13px;color:#000;">0</span>
<div class="sp" style="left:195.8px;top:167.5px;width:17px;height:10.5px;"></div>
<div class="sp" style="left:195.8px;top:179.8px;width:17px;height:10.5px;"></div>
<svg style="left:195.8px;top:167.5px;" width="17" height="10.5" viewBox="0 0 17 10.5"><path d="M5.500 6.800h6L8.500 3.600z" fill="#e8e8e8"/></svg>
<svg style="left:195.8px;top:179.8px;" width="17" height="10.5" viewBox="0 0 17 10.5"><path d="M5.500 3.600h6L8.500 6.800z" fill="#e8e8e8"/></svg>
<span class="t" style="left:7.3px;top:199.5px;font-size:14px;color:#f2f2f2;transform:scaleX(1.0167);">回転角度:</span>
<div class="inp" style="left:110.8px;top:195.5px;width:56px;height:21px;"></div>
<span class="t" style="left:155.8px;top:200px;font-size:13px;color:#000;">0</span>
<span class="t" style="left:172.8px;top:199.5px;font-size:14px;color:#f2f2f2;transform:scaleX(0.9643);">度</span>
<span class="t" style="left:6.3px;top:225.7px;font-size:14px;color:#f2f2f2;transform:scaleX(0.7698);">スタータートレッド</span>
<div class="chk" style="left:110.8px;top:225.8px;width:14.5px;height:14px;"></div>
<span class="t" style="left:129.3px;top:225.7px;font-size:14px;color:#f2f2f2;transform:scaleX(0.9286);">左</span>
<div class="chk" style="left:147.8px;top:225.8px;width:14.5px;height:14px;"></div>
<span class="t" style="left:165.8px;top:225.7px;font-size:14px;color:#f2f2f2;transform:scaleX(0.9286);">右</span>
<span class="t" style="left:59.3px;top:254px;font-size:14px;color:#f2f2f2;">奥行:</span>
<div class="inp" style="left:109.3px;top:250.3px;width:70.5px;height:21.2px;"></div>
<span class="t" style="left:142.8px;top:254.5px;font-size:13px;color:#000;">290</span>
<div style="left:165.3px;top:251.3px;width:1px;height:19.2px;background:#9a9a9a"></div>
<svg style="left:166.3px;top:251.8px;" width="13" height="18.5" viewBox="0 0 13 18.5"><path d="M1.500 4.500h10L6.500 14z" fill="#000"/></svg>
<span class="t" style="left:185.8px;top:255.5px;font-size:12px;color:#f2f2f2;font-family:'Liberation Mono','IPAGothic',monospace;transform:scaleX(0.9286);">mm</span>
<div class="dd" style="left:6.3px;top:282px;width:113px;height:22.5px;"></div>
<span class="t" style="left:11.3px;top:286.75px;font-size:14px;color:#f2f2f2;transform:scaleX(1.0536);">数値移動</span>
<svg style="left:102.8px;top:288px;" width="12" height="11" viewBox="0 0 12 11"><path d="M.5 .5h11L6 10z" fill="#6a6e73"/></svg>
<div class="dd" style="left:124.5px;top:282px;width:112px;height:22.5px;"></div>
<span class="t" style="left:129.5px;top:286.75px;font-size:14px;color:#f2f2f2;transform:scaleX(0.8714);">数値コピー</span>
<svg style="left:220px;top:288px;" width="12" height="11" viewBox="0 0 12 11"><path d="M.5 .5h11L6 10z" fill="#6a6e73"/></svg>
<div class="dd" style="left:6.3px;top:309.3px;width:230.5px;height:29.5px;"></div>
<svg style="left:46.8px;top:312px;" width="72" height="24" viewBox="0 0 72 24"><g><path d="M1.0 21.0l5.500-3.200h13l-5.500 3.200z" fill="#c8782c"/><path d="M1.0 21.0h13v1.400h-13z" fill="#8a4a14"/><path d="M4.2 17.7l5.500-3.200h13l-5.500 3.200z" fill="#c8782c"/><path d="M4.2 17.7h13v1.400h-13z" fill="#8a4a14"/><path d="M7.4 14.4l5.500-3.200h13l-5.500 3.200z" fill="#c8782c"/><path d="M7.4 14.4h13v1.400h-13z" fill="#8a4a14"/><path d="M10.600000000000001 11.100000000000001l5.500-3.200h13l-5.500 3.200z" fill="#c8782c"/><path d="M10.600000000000001 11.100000000000001h13v1.400h-13z" fill="#8a4a14"/><path d="M13.8 7.800000000000001l5.500-3.200h13l-5.500 3.200z" fill="#c8782c"/><path d="M13.8 7.800000000000001h13v1.400h-13z" fill="#8a4a14"/>
<path d="M24.500 22V16L35 1.500l2 1L27 16.500V22z" fill="#f0f0f0"/><path d="M27 22V16.500L37 2.500l9.500 3.500V22z" fill="#b4b4b4"/><path d="M27.500 20.500h9v1.500h-9zM29 17h8v1.500h-8zM31 13.500h7v1.500h-7zM33 10h5.500v1.500H33zM35 6.500h4v1.500h-4z" fill="#b86a20"/>
<path d="M50.500 22V9l5.500-6.500V16zM62 22V8l6-6.500V15zM50.500 9h11.500M56 2.500l12-1M50.500 22h11.500l6-7M50.500 15.500h11.500l6-6.500" fill="none" stroke="#a8acb0" stroke-width="1.100"/><path d="M52 19.500h11M54 15h11M56 11h10" stroke="#d88830" stroke-width="1.600"/></g></svg>
<span class="t" style="left:119.8px;top:316.5px;font-size:15px;color:#f2f2f2;transform:scaleX(0.8556);">デザイン変更</span>
<div class="chk" style="left:6.6px;top:348px;width:14.5px;height:14.5px;"></div>
<span class="t" style="left:24.3px;top:348.5px;font-size:14px;color:#f2f2f2;transform:scaleX(0.8500);">カット表示</span>
<div class="dd" style="left:6.3px;top:372px;width:230.5px;height:22px;"></div>
<span class="t" style="left:85.1px;top:376.5px;font-size:14px;color:#f2f2f2;transform:scaleX(1.0446);">簡易設定</span>
<svg style="left:144.8px;top:376.5px;" width="14" height="13" viewBox="0 0 14 13"><path d="M1 6.500L7 1.500l6 5M1 12L7 7l6 5" fill="none" stroke="#8e9296" stroke-width="1.800"/></svg>
<div style="left:6.3px;top:404px;width:210px;height:3px;background:#8a6a0e"></div>
<div style="left:216.3px;top:399.3px;width:20.5px;height:189.5px;background:#33383c"></div>
<svg style="left:216.3px;top:418px;" width="20.5" height="14" viewBox="0 0 20.5 14"><path d="M3.500 11.500L10.200 4.500l6.700 7" fill="none" stroke="#474d52" stroke-width="3"/></svg>
<svg style="left:216.3px;top:554px;" width="20.5" height="14" viewBox="0 0 20.5 14"><path d="M3.500 2.500l6.700 7 6.700-7" fill="none" stroke="#474d52" stroke-width="3"/></svg>
<div style="left:217.8px;top:491px;width:18.5px;height:41px;background:#4c5156"></div>
<span class="t" style="left:7.3px;top:420px;font-size:14px;color:#f5c02c;transform:scaleX(0.8393);">高さ</span>
<div class="dd" style="left:6.3px;top:441.5px;width:165px;height:22px;"></div>
<span class="t" style="left:12.3px;top:446px;font-size:14px;color:#f2f2f2;transform:scaleX(0.9554);">固定高さ</span>
<svg style="left:154.8px;top:447.5px;" width="12" height="11" viewBox="0 0 12 11"><path d="M.5 .5h11L6 10z" fill="#6a6e73"/></svg>
<svg style="left:0px;top:457px;" width="190" height="14" viewBox="0 0 190 14"><path d="M3.500 4.200L181.500 9" stroke="#f0000c" stroke-width="3" fill="none"/></svg>
<span class="t" style="left:7.3px;top:470px;font-size:14px;color:#f2f2f2;transform:scaleX(1.0109);">上端高:</span>
<div class="inp" style="left:110.8px;top:467px;width:56px;height:19.5px;"></div>
<span class="t" style="left:134.3px;top:470.75px;font-size:13px;color:#000;">2900</span>
<span class="t" style="left:172.8px;top:471.5px;font-size:12px;color:#f2f2f2;font-family:'Liberation Mono','IPAGothic',monospace;transform:scaleX(0.9643);">mm</span>
<span class="t" style="left:7.3px;top:496px;font-size:14px;color:#f2f2f2;transform:scaleX(1.0109);">下端高:</span>
<div class="inp" style="left:110.8px;top:492.5px;width:56px;height:20.5px;"></div>
<span class="t" style="left:134.3px;top:496.75px;font-size:13px;color:#000;">1600</span>
<span class="t" style="left:172.8px;top:497.5px;font-size:12px;color:#f2f2f2;font-family:'Liberation Mono','IPAGothic',monospace;transform:scaleX(0.9643);">mm</span>
<div class="chk" style="left:6.6px;top:522.5px;width:14.5px;height:14.5px;"></div>
<span class="t" style="left:25.6px;top:522.5px;font-size:14px;color:#f2f2f2;transform:scaleX(1.0179);">最上部は踏面</span>
<div style="left:1.8px;top:539.5px;width:118.5px;height:3px;background:#f0000c"></div>
<span class="t" style="left:6.3px;top:552px;font-size:14px;color:#f2f2f2;transform:scaleX(1.0600);">UP/DN表示:</span>
<div class="dd" style="left:110.1px;top:546.5px;width:92.5px;height:22px;"></div>
<span class="t" style="left:115.3px;top:551px;font-size:14px;color:#f2f2f2;transform:scaleX(1.0227);">UP/DN</span>
<svg style="left:186.1px;top:552.5px;" width="12" height="11" viewBox="0 0 12 11"><path d="M.5 .5h11L6 10z" fill="#6a6e73"/></svg>
<div style="left:6.3px;top:576.3px;width:210px;height:3px;background:#8a6a0e"></div>
<div class="chk" style="left:6.6px;top:600.2px;width:14.5px;height:14.5px;"></div>
<span class="t" style="left:25.6px;top:600.5px;font-size:14px;color:#f2f2f2;transform:scaleX(1.0357);">警告表示</span>
<svg style="left:6.3px;top:624px;" width="25" height="24.5" viewBox="0 0 25 24.5"><defs><linearGradient id="wy" x1="0" y1="0" x2="0" y2="1"><stop offset="0" stop-color="#fff04a"/><stop offset="1" stop-color="#d8b010"/></linearGradient></defs>
<rect width="25" height="24.500" fill="url(#wy)"/><path d="M6 19.500h16.500V7.500h-4.200v4h-4.200v4h-4.100v4z" fill="#141414"/><path d="M5.500 4.500h4l-1 5.500h-2zM6 11.500h3v2.500H6z" fill="#141414"/></svg>
<span class="t" style="left:36.8px;top:637px;font-size:14px;color:#e8506c;transform:scaleX(1.0389);">住宅性能表示制度の等級3(高</span>
<span class="t" style="left:6.3px;top:658px;font-size:14px;color:#e8506c;transform:scaleX(0.9764);">齢者等配慮)に満たない階段です。(蹴</span>
<span class="t" style="left:6.3px;top:679.5px;font-size:14px;color:#e8506c;transform:scaleX(1.0284);">上×2+踏面)は550～650mmの範囲</span>
<span class="t" style="left:6.3px;top:699.5px;font-size:14px;color:#e8506c;transform:scaleX(0.8373);">内にしてください。</span>
</div>
<div style="left:20px;top:20px;width:1490px;height:910px;box-shadow:inset 0 0 0 1px rgba(90,94,100,.5);pointer-events:none"></div>
</body></html>
